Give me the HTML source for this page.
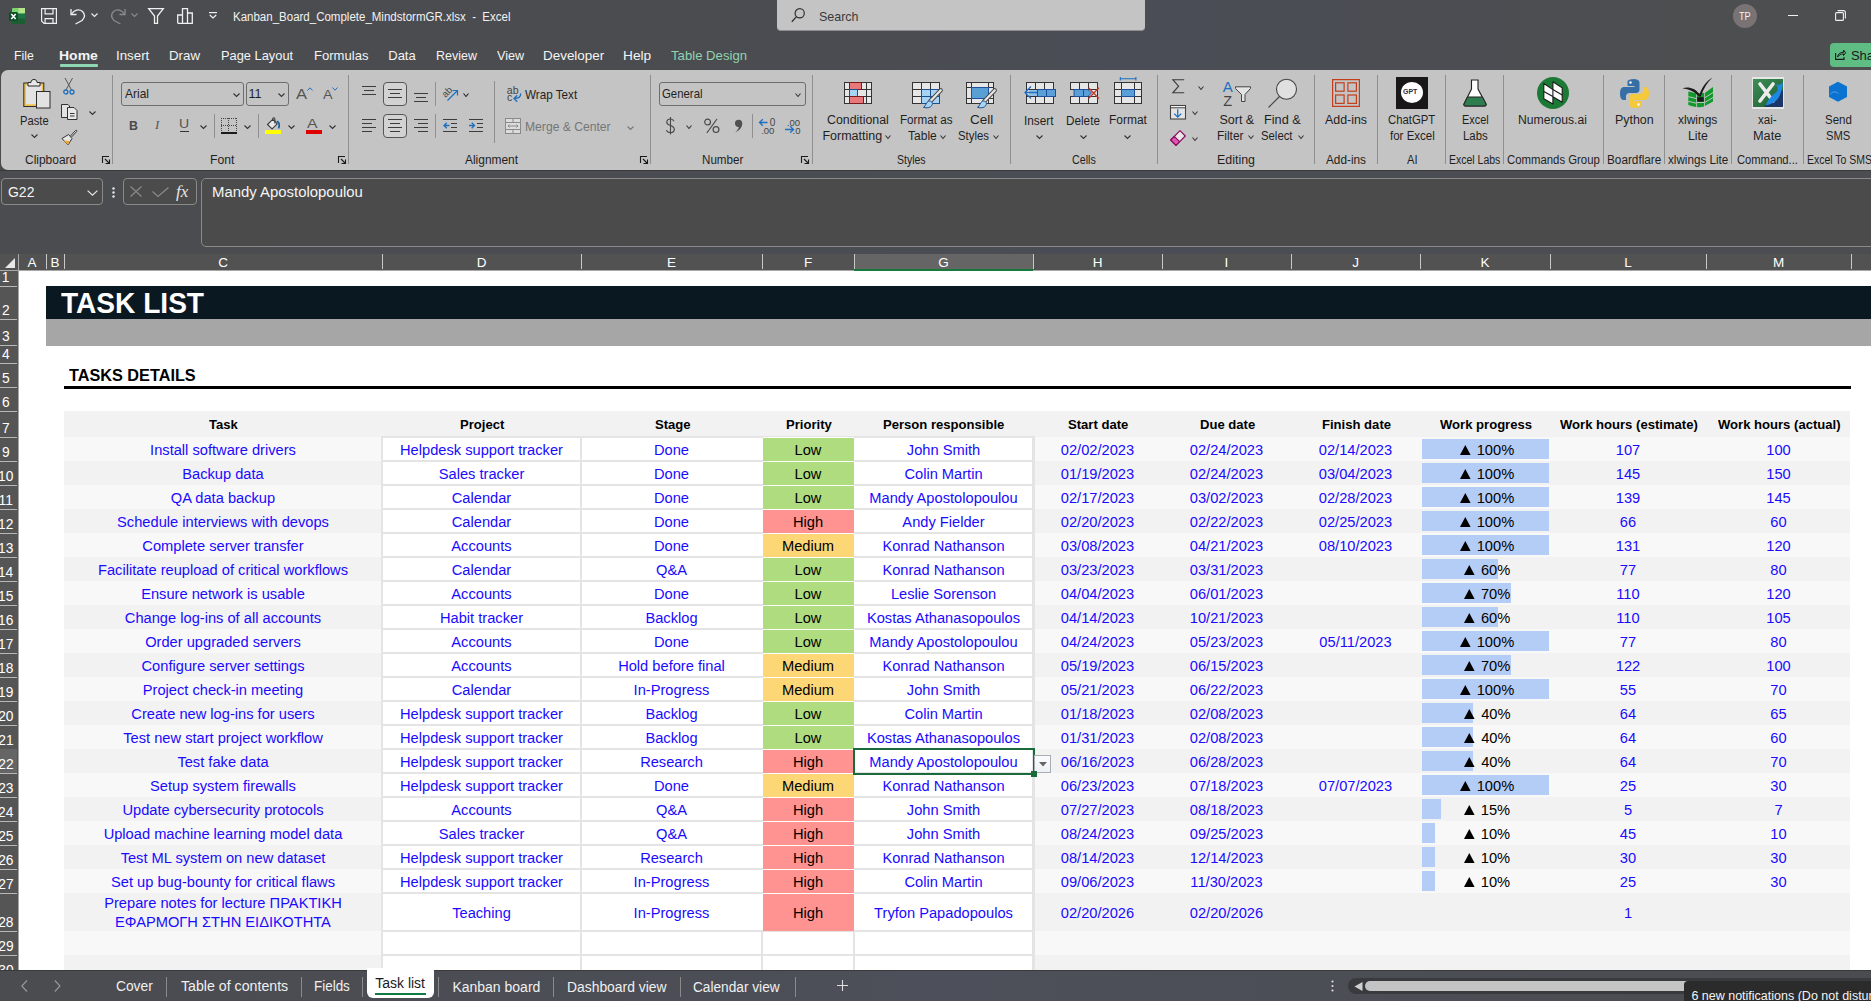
<!DOCTYPE html><html><head><meta charset="utf-8"><title>Excel</title><style>
*{margin:0;padding:0;box-sizing:border-box}
html,body{width:1871px;height:1001px;overflow:hidden;background:#4a4b4f;font-family:"Liberation Sans",sans-serif}
.a{position:absolute}
.t{position:absolute;white-space:nowrap;font-family:"Liberation Sans",sans-serif}
.cell{position:absolute;display:flex;align-items:center;justify-content:center;white-space:nowrap;font-size:14.67px;color:#1010f0;font-family:"Liberation Sans",sans-serif}
svg{overflow:visible}
</style></head><body>
<div class="a" style="left:0px;top:0px;width:1871px;height:70px;background:linear-gradient(90deg,#4b4c4f 0%,#4b4c50 35%,#4a4d55 60%,#4b4d53 75%,#4d4e50 90%,#4d4e50 100%);"></div>
<svg class="a" style="left:9px;top:8px" width="16" height="16" viewBox="0 0 16 16"><rect x="3" y="0" width="13" height="16" rx="1.5" fill="#217346"/>
<rect x="3" y="0" width="13" height="5.3" rx="1.2" fill="#7dd46f"/><rect x="9.5" y="0" width="6.5" height="5.3" fill="#b5e58a"/>
<rect x="3" y="10.6" width="13" height="5.4" rx="1.2" fill="#1a5e32"/>
<rect x="0" y="4" width="9" height="9" rx="1.5" fill="#0e4f2a"/>
<path d="M2.3 6 L6.7 11 M6.7 6 L2.3 11" stroke="#fff" stroke-width="1.5"/></svg>
<svg class="a" style="left:41px;top:8px" width="17" height="17" viewBox="0 0 17 17"><path d="M0.6 0.6 H15.4 V15.4 H3 L0.6 13 Z" fill="none" stroke="#f0f0f0" stroke-width="1.2"/>
<path d="M4.1 0.6 V5.8 H12 V0.6" fill="none" stroke="#f0f0f0" stroke-width="1.2"/>
<path d="M4.1 15.4 V10.6 H12 V15.4" fill="none" stroke="#f0f0f0" stroke-width="1.2"/></svg>
<svg class="a" style="left:70px;top:8px" width="16" height="16" viewBox="0 0 16 16"><path d="M1 1 V6.5 H6.5" fill="none" stroke="#f0f0f0" stroke-width="1.3"/>
<path d="M1.5 6 C4 2 9 0.5 12.5 3.5 C15.5 6.5 14.5 10 12 12.5 L5.5 16" fill="none" stroke="#f0f0f0" stroke-width="1.3"/></svg>
<svg class="a" style="left:91px;top:13px" width="7" height="4" viewBox="0 0 7 4"><path d="M0.5 0.5 L3.5 3.5 L6.5 0.5" fill="none" stroke="#f0f0f0" stroke-width="1.1"/></svg>
<svg class="a" style="left:110px;top:8px" width="16" height="16" viewBox="0 0 16 16"><path d="M15 1 V6.5 H9.5" fill="none" stroke="#8a8b8e" stroke-width="1.3"/>
<path d="M14.5 6 C12 2 7 0.5 3.5 3.5 C0.5 6.5 1.5 10 4 12.5 L10.5 16" fill="none" stroke="#8a8b8e" stroke-width="1.3"/></svg>
<svg class="a" style="left:131px;top:13px" width="7" height="4" viewBox="0 0 7 4"><path d="M0.5 0.5 L3.5 3.5 L6.5 0.5" fill="none" stroke="#8a8b8e" stroke-width="1.1"/></svg>
<svg class="a" style="left:148px;top:8px" width="16" height="16" viewBox="0 0 16 16"><path d="M0.7 0.7 H15.3 L9.5 8 V15.3 H6.5 V8 Z" fill="none" stroke="#f0f0f0" stroke-width="1.3"/></svg>
<svg class="a" style="left:177px;top:8px" width="16" height="16" viewBox="0 0 16 16"><path d="M0.7 15.3 V7 H5.5 V15.3 M5.5 15.3 V0.7 H10.5 V15.3 M10.5 15.3 V5 H15.3 V15.3 Z M0.7 15.3 H15.3" fill="none" stroke="#f0f0f0" stroke-width="1.3"/></svg>
<svg class="a" style="left:209px;top:12px" width="8" height="7" viewBox="0 0 8 7"><path d="M0 0.6 H8" stroke="#f0f0f0" stroke-width="1.2"/><path d="M0.8 3 L4 6 L7.2 3" fill="none" stroke="#f0f0f0" stroke-width="1.2"/></svg>
<div class="t" style="left:233.18px;top:10.67px;font-size:12.5px;line-height:12.5px;color:#f2f2f2;transform:scaleX(0.9203);transform-origin:0 0;">Kanban_Board_Complete_MindstormGR.xlsx&nbsp; -&nbsp; Excel</div>
<div class="a" style="left:777px;top:0px;width:368px;height:31px;background:#c4c4c4;border-radius:0 0 4px 4px;border-bottom:1px solid #8e8e8e"></div>
<svg class="a" style="left:791px;top:8px" width="14" height="15" viewBox="0 0 14 15"><circle cx="8.7" cy="5.3" r="4.6" fill="none" stroke="#303030" stroke-width="1.2"/><path d="M5.5 8.6 L0.8 13.8" stroke="#303030" stroke-width="1.3"/></svg>
<div class="t" style="left:818.74px;top:10.25px;font-size:13px;line-height:13px;color:#3a3a3a;transform:scaleX(0.9603);transform-origin:0 0;">Search</div>
<div class="a" style="left:1733px;top:4px;width:24px;height:24px;border-radius:50%;background:#7a7373"></div>
<div class="t" style="left:1739.32px;top:10.94px;font-size:11px;line-height:11px;color:#f4f4f4;transform:scaleX(0.8299);transform-origin:0 0;">TP</div>
<div class="a" style="left:1788px;top:15px;width:10px;height:1px;background:#f0f0f0;"></div>
<svg class="a" style="left:1835px;top:10px" width="11" height="11" viewBox="0 0 11 11"><rect x="0.6" y="2.6" width="7.8" height="7.8" rx="1" fill="none" stroke="#f0f0f0" stroke-width="1.1"/><path d="M2.6 0.6 H8.4 C9.5 0.6 10.4 1.5 10.4 2.6 V8.4" fill="none" stroke="#f0f0f0" stroke-width="1.1"/></svg>
<div class="a" style="left:1830px;top:43px;width:60px;height:24px;background:#5fbd84;border-radius:4px"></div>
<svg class="a" style="left:1835px;top:49px" width="11" height="11" viewBox="0 0 11 11"><path d="M0.6 4 V10.4 H9 V8" fill="none" stroke="#1a1a1a" stroke-width="1.1"/><path d="M2.5 8 C3 4.5 5.5 3.3 8.5 3.3 V1 L10.6 3.8 L8.5 6.5 V4.9 C6 4.9 4 6 2.5 8 Z" fill="none" stroke="#1a1a1a" stroke-width="1"/></svg>
<div class="t" style="left:1850.91px;top:49.25px;font-size:13px;line-height:13px;color:#1a1a1a;">Sha</div>
<div class="t" style="left:14.22px;top:49.25px;font-size:13px;line-height:13px;color:#f4f4f4;transform:scaleX(0.9448);transform-origin:0 0;">File</div>
<div class="t" style="left:59.09px;top:49.25px;font-size:13px;line-height:13px;color:#f4f4f4;font-weight:bold;transform:scaleX(1.0763);transform-origin:0 0;">Home</div>
<div class="t" style="left:115.80px;top:49.25px;font-size:13px;line-height:13px;color:#f4f4f4;transform:scaleX(1.0235);transform-origin:0 0;">Insert</div>
<div class="t" style="left:168.94px;top:49.25px;font-size:13px;line-height:13px;color:#f4f4f4;transform:scaleX(1.0234);transform-origin:0 0;">Draw</div>
<div class="t" style="left:220.97px;top:49.25px;font-size:13px;line-height:13px;color:#f4f4f4;transform:scaleX(0.9876);transform-origin:0 0;">Page Layout</div>
<div class="t" style="left:313.95px;top:49.25px;font-size:13px;line-height:13px;color:#f4f4f4;transform:scaleX(1.0054);transform-origin:0 0;">Formulas</div>
<div class="t" style="left:388.26px;top:49.25px;font-size:13px;line-height:13px;color:#f4f4f4;">Data</div>
<div class="t" style="left:436.20px;top:49.25px;font-size:13px;line-height:13px;color:#f4f4f4;transform:scaleX(0.9591);transform-origin:0 0;">Review</div>
<div class="t" style="left:496.94px;top:49.25px;font-size:13px;line-height:13px;color:#f4f4f4;transform:scaleX(0.9683);transform-origin:0 0;">View</div>
<div class="t" style="left:542.92px;top:49.25px;font-size:13px;line-height:13px;color:#f4f4f4;transform:scaleX(1.0337);transform-origin:0 0;">Developer</div>
<div class="t" style="left:622.90px;top:49.25px;font-size:13px;line-height:13px;color:#f4f4f4;transform:scaleX(1.0535);transform-origin:0 0;">Help</div>
<div class="t" style="left:670.74px;top:49.25px;font-size:13px;line-height:13px;color:#8fd3b0;transform:scaleX(1.0121);transform-origin:0 0;">Table Design</div>
<div class="a" style="left:60px;top:64px;width:38px;height:3px;background:#8fd6b5;border-radius:1px"></div>
<div class="a" style="left:1px;top:70px;width:1890px;height:100px;background:#c4c4c4;border-radius:7px 0 0 7px"></div>
<div class="a" style="left:112px;top:75px;width:1px;height:89px;background:#8f8f8f;"></div>
<div class="a" style="left:348px;top:75px;width:1px;height:89px;background:#8f8f8f;"></div>
<div class="a" style="left:650px;top:75px;width:1px;height:89px;background:#8f8f8f;"></div>
<div class="a" style="left:812px;top:75px;width:1px;height:89px;background:#8f8f8f;"></div>
<div class="a" style="left:1010px;top:75px;width:1px;height:89px;background:#8f8f8f;"></div>
<div class="a" style="left:1157px;top:75px;width:1px;height:89px;background:#8f8f8f;"></div>
<div class="a" style="left:1314px;top:75px;width:1px;height:89px;background:#8f8f8f;"></div>
<div class="a" style="left:1377px;top:75px;width:1px;height:89px;background:#8f8f8f;"></div>
<div class="a" style="left:1445px;top:75px;width:1px;height:89px;background:#8f8f8f;"></div>
<div class="a" style="left:1503px;top:75px;width:1px;height:89px;background:#8f8f8f;"></div>
<div class="a" style="left:1603px;top:75px;width:1px;height:89px;background:#8f8f8f;"></div>
<div class="a" style="left:1664px;top:75px;width:1px;height:89px;background:#8f8f8f;"></div>
<div class="a" style="left:1731px;top:75px;width:1px;height:89px;background:#8f8f8f;"></div>
<div class="a" style="left:1803px;top:75px;width:1px;height:89px;background:#8f8f8f;"></div>
<svg class="a" style="left:23px;top:79px" width="28" height="30" viewBox="0 0 28 30"><rect x="0.8" y="4" width="20" height="23.5" fill="#f2c14e" stroke="#2b2b2b" stroke-width="1"/>
<rect x="3" y="6.2" width="15.6" height="19" fill="#e3e3e3"/>
<path d="M5 7 V3.5 H8 C8 1.2 9.5 0.5 11 0.5 C12.5 0.5 14 1.2 14 3.5 H17 V7 Z" fill="#e8e8e8" stroke="#2b2b2b" stroke-width="1"/>
<rect x="13.5" y="12.5" width="13.5" height="16.5" fill="#e3e3e3" stroke="#2b2b2b" stroke-width="1"/></svg>
<div class="t" style="left:19.80px;top:114.84px;font-size:12.3px;line-height:12.3px;color:#1f1f1f;transform:scaleX(0.9115);transform-origin:0 0;">Paste</div>
<svg class="a" style="left:31px;top:134px" width="7" height="4" viewBox="0 0 7 4"><path d="M0.5 0.5 L3.5 3.5 L6.5 0.5" fill="none" stroke="#333" stroke-width="1.1"/></svg>
<svg class="a" style="left:63px;top:78px" width="12" height="17" viewBox="0 0 12 17"><path d="M2 0 L8.5 12 M9.5 0 L3 12" stroke="#555" stroke-width="1"/>
<circle cx="2.8" cy="14" r="2" fill="none" stroke="#1d6fc0" stroke-width="1.3"/><circle cx="9" cy="14" r="2" fill="none" stroke="#1d6fc0" stroke-width="1.3"/></svg>
<svg class="a" style="left:61px;top:104px" width="17" height="17" viewBox="0 0 17 17"><path d="M0.5 13.5 V0.5 H7 L8.5 2 V13.5 Z" fill="#e3e3e3" stroke="#333" stroke-width="1"/>
<path d="M6.5 15.5 V3.5 H13 L16 6.5 V15.5 Z" fill="#e8e8e8" stroke="#333" stroke-width="1"/>
<path d="M9 9.5 H13.5 M9 12 H13.5" stroke="#333" stroke-width="1"/></svg>
<svg class="a" style="left:89px;top:111px" width="7" height="4" viewBox="0 0 7 4"><path d="M0.5 0.5 L3.5 3.5 L6.5 0.5" fill="none" stroke="#333" stroke-width="1.1"/></svg>
<svg class="a" style="left:61px;top:129px" width="17" height="17" viewBox="0 0 17 17"><path d="M9.5 7 L14.5 1.5 C15.3 0.6 16.5 1.8 15.6 2.6 L10.5 8" fill="#e8e8e8" stroke="#333" stroke-width="1"/>
<path d="M1 9.5 L7.5 5.5 L11 9.5 L7 16 Z" fill="#e8e8e8" stroke="#333" stroke-width="1"/>
<path d="M2.5 11.5 L9 12 L7 16 Z" fill="#e8a93a"/></svg>
<div class="t" style="left:25.00px;top:153.84px;font-size:12.3px;line-height:12.3px;color:#1f1f1f;transform:scaleX(0.9729);transform-origin:0 0;">Clipboard</div>
<svg class="a" style="left:102px;top:156px" width="9" height="9" viewBox="0 0 9 9"><path d="M0.5 7 V0.5 H7" fill="none" stroke="#1a1a1a" stroke-width="1.1"/><path d="M3 3 L7.5 7.5 M7.5 3.5 V7.5 H3.5" fill="none" stroke="#1a1a1a" stroke-width="1.1"/></svg>
<div class="a" style="left:121px;top:82px;width:123px;height:24px;border:1px solid #6e6e6e;border-radius:3px"></div>
<div class="t" style="left:124.60px;top:87.58px;font-size:12.6px;line-height:12.6px;color:#1f1f1f;transform:scaleX(0.9516);transform-origin:0 0;">Arial</div>
<svg class="a" style="left:233px;top:93px" width="7" height="4" viewBox="0 0 7 4"><path d="M0.5 0.5 L3.5 3.5 L6.5 0.5" fill="none" stroke="#333" stroke-width="1.1"/></svg>
<div class="a" style="left:246px;top:82px;width:43px;height:24px;border:1px solid #6e6e6e;border-radius:3px"></div>
<div class="t" style="left:248.56px;top:87.58px;font-size:12.6px;line-height:12.6px;color:#1f1f1f;">11</div>
<svg class="a" style="left:278px;top:93px" width="7" height="4" viewBox="0 0 7 4"><path d="M0.5 0.5 L3.5 3.5 L6.5 0.5" fill="none" stroke="#333" stroke-width="1.1"/></svg>
<div class="t" style="left:296.00px;top:86.98px;font-size:14.5px;line-height:14.5px;color:#555;transform:scaleX(1.1408);transform-origin:0 0;">A</div>
<svg class="a" style="left:307px;top:87px" width="6" height="4" viewBox="0 0 6 4"><path d="M0.5 3.5 L3 0.8 L5.5 3.5" fill="none" stroke="#1d6fc0" stroke-width="1"/></svg>
<div class="t" style="left:323.00px;top:88.67px;font-size:12.5px;line-height:12.5px;color:#555;transform:scaleX(1.1429);transform-origin:0 0;">A</div>
<svg class="a" style="left:332px;top:87px" width="6" height="4" viewBox="0 0 6 4"><path d="M0.5 0.5 L3 3.2 L5.5 0.5" fill="none" stroke="#1d6fc0" stroke-width="1"/></svg>
<div class="t" style="left:128.60px;top:119.67px;font-size:12.5px;line-height:12.5px;color:#4a4a4a;font-weight:bold;transform:scaleX(0.9886);transform-origin:0 0;">B</div>
<div class="t" style="left:155px;top:118px;font-size:13px;line-height:13px;color:#555;font-style:italic;font-family:'Liberation Serif',serif">I</div>
<div class="t" style="left:179.45px;top:118.09px;font-size:12px;line-height:12px;color:#555;transform:scaleX(1.1696);transform-origin:0 0;">U</div>
<div class="a" style="left:180px;top:131px;width:9px;height:1px;background:#333;"></div>
<svg class="a" style="left:200px;top:125px" width="7" height="4" viewBox="0 0 7 4"><path d="M0.5 0.5 L3.5 3.5 L6.5 0.5" fill="none" stroke="#333" stroke-width="1.1"/></svg>
<div class="a" style="left:214px;top:114px;width:1px;height:24px;background:#8f8f8f;"></div>
<svg class="a" style="left:221px;top:118px" width="16" height="16" viewBox="0 0 16 16"><rect x="0" y="0" width="1" height="1" fill="#444"/><rect x="0" y="0" width="1" height="1" fill="#444"/><rect x="15" y="0" width="1" height="1" fill="#444"/><rect x="0" y="7" width="1" height="1" fill="#444"/><rect x="7" y="0" width="1" height="1" fill="#444"/><rect x="2" y="0" width="1" height="1" fill="#444"/><rect x="0" y="2" width="1" height="1" fill="#444"/><rect x="15" y="2" width="1" height="1" fill="#444"/><rect x="2" y="7" width="1" height="1" fill="#444"/><rect x="7" y="2" width="1" height="1" fill="#444"/><rect x="4" y="0" width="1" height="1" fill="#444"/><rect x="0" y="4" width="1" height="1" fill="#444"/><rect x="15" y="4" width="1" height="1" fill="#444"/><rect x="4" y="7" width="1" height="1" fill="#444"/><rect x="7" y="4" width="1" height="1" fill="#444"/><rect x="6" y="0" width="1" height="1" fill="#444"/><rect x="0" y="6" width="1" height="1" fill="#444"/><rect x="15" y="6" width="1" height="1" fill="#444"/><rect x="6" y="7" width="1" height="1" fill="#444"/><rect x="7" y="6" width="1" height="1" fill="#444"/><rect x="8" y="0" width="1" height="1" fill="#444"/><rect x="0" y="8" width="1" height="1" fill="#444"/><rect x="15" y="8" width="1" height="1" fill="#444"/><rect x="8" y="7" width="1" height="1" fill="#444"/><rect x="7" y="8" width="1" height="1" fill="#444"/><rect x="10" y="0" width="1" height="1" fill="#444"/><rect x="0" y="10" width="1" height="1" fill="#444"/><rect x="15" y="10" width="1" height="1" fill="#444"/><rect x="10" y="7" width="1" height="1" fill="#444"/><rect x="7" y="10" width="1" height="1" fill="#444"/><rect x="12" y="0" width="1" height="1" fill="#444"/><rect x="0" y="12" width="1" height="1" fill="#444"/><rect x="15" y="12" width="1" height="1" fill="#444"/><rect x="12" y="7" width="1" height="1" fill="#444"/><rect x="7" y="12" width="1" height="1" fill="#444"/><rect x="14" y="0" width="1" height="1" fill="#444"/><rect x="0" y="14" width="1" height="1" fill="#444"/><rect x="15" y="14" width="1" height="1" fill="#444"/><rect x="14" y="7" width="1" height="1" fill="#444"/><rect x="7" y="14" width="1" height="1" fill="#444"/><rect x="0" y="14" width="16" height="2" fill="#1a1a1a"/></svg>
<svg class="a" style="left:244px;top:125px" width="7" height="4" viewBox="0 0 7 4"><path d="M0.5 0.5 L3.5 3.5 L6.5 0.5" fill="none" stroke="#333" stroke-width="1.1"/></svg>
<div class="a" style="left:258px;top:114px;width:1px;height:24px;background:#8f8f8f;"></div>
<svg class="a" style="left:265px;top:116px" width="17" height="19" viewBox="0 0 17 19"><path d="M2.5 8.5 L7.8 3.3 L12.2 7.8 L7.1 12.8 Z" fill="#e8e8e8" stroke="#3a3a3a" stroke-width="1.1" stroke-linejoin="round"/>
<path d="M7.6 3.6 C7.6 1.2 9.9 1.2 9.9 3.6 V7.4" fill="none" stroke="#3a3a3a" stroke-width="1.1"/>
<path d="M12.3 5.6 C14.3 6 14.6 8.8 13.8 11.8" fill="none" stroke="#0f5aa0" stroke-width="1.6" stroke-linecap="round"/>
<rect x="0" y="14" width="16" height="4" fill="#ffff00"/></svg>
<svg class="a" style="left:288px;top:125px" width="7" height="4" viewBox="0 0 7 4"><path d="M0.5 0.5 L3.5 3.5 L6.5 0.5" fill="none" stroke="#333" stroke-width="1.1"/></svg>
<div class="t" style="left:307.00px;top:116.82px;font-size:13.5px;line-height:13.5px;color:#555;transform:scaleX(1.1696);transform-origin:0 0;">A</div>
<div class="a" style="left:306px;top:130px;width:16px;height:4px;background:#e00000;"></div>
<svg class="a" style="left:329px;top:125px" width="7" height="4" viewBox="0 0 7 4"><path d="M0.5 0.5 L3.5 3.5 L6.5 0.5" fill="none" stroke="#333" stroke-width="1.1"/></svg>
<div class="t" style="left:210.42px;top:153.84px;font-size:12.3px;line-height:12.3px;color:#1f1f1f;transform:scaleX(0.9934);transform-origin:0 0;">Font</div>
<svg class="a" style="left:338px;top:156px" width="9" height="9" viewBox="0 0 9 9"><path d="M0.5 7 V0.5 H7" fill="none" stroke="#1a1a1a" stroke-width="1.1"/><path d="M3 3 L7.5 7.5 M7.5 3.5 V7.5 H3.5" fill="none" stroke="#1a1a1a" stroke-width="1.1"/></svg>
<div class="a" style="left:362px;top:86px;width:14px;height:1px;background:#3c3c3c;"></div>
<div class="a" style="left:364px;top:90px;width:10px;height:1px;background:#3c3c3c;"></div>
<div class="a" style="left:362px;top:94px;width:14px;height:1px;background:#3c3c3c;"></div>
<div class="a" style="left:383px;top:82px;width:24px;height:24px;border:1px solid #555;border-radius:4px;background:#d2d2d2"></div>
<div class="a" style="left:388px;top:89px;width:14px;height:1px;background:#3c3c3c;"></div>
<div class="a" style="left:390px;top:93px;width:10px;height:1px;background:#3c3c3c;"></div>
<div class="a" style="left:388px;top:97px;width:14px;height:1px;background:#3c3c3c;"></div>
<div class="a" style="left:414px;top:93px;width:14px;height:1px;background:#3c3c3c;"></div>
<div class="a" style="left:416px;top:97px;width:10px;height:1px;background:#3c3c3c;"></div>
<div class="a" style="left:414px;top:101px;width:14px;height:1px;background:#3c3c3c;"></div>
<div class="a" style="left:435px;top:82px;width:1px;height:24px;background:#8f8f8f;"></div>
<svg class="a" style="left:440px;top:84px" width="20" height="18" viewBox="0 0 20 18"><text x="0" y="0" font-size="9.5" fill="#444" transform="translate(5.5 14) rotate(-45)" font-family="Liberation Sans">ab</text>
<path d="M7.5 16.5 L17 7 M12.5 6.5 H17.5 V11.5" fill="none" stroke="#1d6fc0" stroke-width="1.2"/></svg>
<svg class="a" style="left:463px;top:93px" width="6" height="4" viewBox="0 0 6 4"><path d="M0.5 0.5 L3.0 3.5 L5.5 0.5" fill="none" stroke="#222" stroke-width="1.1"/></svg>
<div class="a" style="left:494px;top:81px;width:1px;height:62px;background:#8f8f8f;"></div>
<svg class="a" style="left:506px;top:84px" width="17" height="19" viewBox="0 0 17 19"><text x="0.8" y="9.8" font-size="10.5" fill="#444" font-family="Liberation Sans">ab</text><text x="1" y="17.2" font-size="10.5" fill="#444" font-family="Liberation Sans">c</text>
<path d="M14.6 10 C14.8 13.3 12.5 14.3 8.2 14.5 M10.8 11.7 L8 14.5 L10.8 17.3" fill="none" stroke="#1d6fc0" stroke-width="1.4" stroke-linecap="round"/></svg>
<div class="t" style="left:524.94px;top:88.58px;font-size:12.6px;line-height:12.6px;color:#1f1f1f;transform:scaleX(0.9274);transform-origin:0 0;">Wrap Text</div>
<div class="a" style="left:362px;top:119px;width:14px;height:1px;background:#3c3c3c;"></div>
<div class="a" style="left:362px;top:123px;width:10px;height:1px;background:#3c3c3c;"></div>
<div class="a" style="left:362px;top:127px;width:14px;height:1px;background:#3c3c3c;"></div>
<div class="a" style="left:362px;top:131px;width:10px;height:1px;background:#3c3c3c;"></div>
<div class="a" style="left:383px;top:114px;width:24px;height:24px;border:1px solid #555;border-radius:4px;background:#d2d2d2"></div>
<div class="a" style="left:388px;top:119px;width:14px;height:1px;background:#3c3c3c;"></div>
<div class="a" style="left:390px;top:123px;width:10px;height:1px;background:#3c3c3c;"></div>
<div class="a" style="left:388px;top:127px;width:14px;height:1px;background:#3c3c3c;"></div>
<div class="a" style="left:390px;top:131px;width:10px;height:1px;background:#3c3c3c;"></div>
<div class="a" style="left:414px;top:119px;width:14px;height:1px;background:#3c3c3c;"></div>
<div class="a" style="left:418px;top:123px;width:10px;height:1px;background:#3c3c3c;"></div>
<div class="a" style="left:414px;top:127px;width:14px;height:1px;background:#3c3c3c;"></div>
<div class="a" style="left:418px;top:131px;width:10px;height:1px;background:#3c3c3c;"></div>
<div class="a" style="left:435px;top:114px;width:1px;height:24px;background:#8f8f8f;"></div>
<div class="a" style="left:443px;top:119px;width:14px;height:1px;background:#3c3c3c;"></div>
<div class="a" style="left:451px;top:123px;width:6px;height:1px;background:#3c3c3c;"></div>
<div class="a" style="left:451px;top:127px;width:6px;height:1px;background:#3c3c3c;"></div>
<div class="a" style="left:443px;top:131px;width:14px;height:1px;background:#3c3c3c;"></div>
<svg class="a" style="left:443px;top:122px" width="7" height="7" viewBox="0 0 7 7"><path d="M6.5 3.5 H1 M3.8 0.7 L1 3.5 L3.8 6.3" fill="none" stroke="#1d6fc0" stroke-width="1.3"/></svg>
<div class="a" style="left:469px;top:119px;width:14px;height:1px;background:#3c3c3c;"></div>
<div class="a" style="left:477px;top:123px;width:6px;height:1px;background:#3c3c3c;"></div>
<div class="a" style="left:477px;top:127px;width:6px;height:1px;background:#3c3c3c;"></div>
<div class="a" style="left:469px;top:131px;width:14px;height:1px;background:#3c3c3c;"></div>
<svg class="a" style="left:469px;top:122px" width="7" height="7" viewBox="0 0 7 7"><path d="M0 3.5 H5.5 M2.7 0.7 L5.5 3.5 L2.7 6.3" fill="none" stroke="#1d6fc0" stroke-width="1.3"/></svg>
<svg class="a" style="left:505px;top:118px" width="16" height="16" viewBox="0 0 16 16"><rect x="0.5" y="0.5" width="15" height="15" fill="#dcdcdc" stroke="#8a8a8a" stroke-width="1"/>
<path d="M0.5 4.5 H15.5 M0.5 11.5 H15.5 M8 0.5 V4.5 M8 11.5 V15.5" stroke="#8a8a8a" stroke-width="1"/>
<path d="M3 8 H13 M4.5 6.5 L3 8 L4.5 9.5 M11.5 6.5 L13 8 L11.5 9.5" fill="none" stroke="#8a8a8a" stroke-width="1"/></svg>
<div class="t" style="left:524.53px;top:120.58px;font-size:12.6px;line-height:12.6px;color:#767676;transform:scaleX(0.9629);transform-origin:0 0;">Merge &amp; Center</div>
<svg class="a" style="left:627px;top:126px" width="7" height="4" viewBox="0 0 7 4"><path d="M0.5 0.5 L3.5 3.5 L6.5 0.5" fill="none" stroke="#777" stroke-width="1.1"/></svg>
<div class="t" style="left:465.00px;top:153.84px;font-size:12.3px;line-height:12.3px;color:#1f1f1f;transform:scaleX(0.9705);transform-origin:0 0;">Alignment</div>
<svg class="a" style="left:640px;top:156px" width="9" height="9" viewBox="0 0 9 9"><path d="M0.5 7 V0.5 H7" fill="none" stroke="#1a1a1a" stroke-width="1.1"/><path d="M3 3 L7.5 7.5 M7.5 3.5 V7.5 H3.5" fill="none" stroke="#1a1a1a" stroke-width="1.1"/></svg>
<div class="a" style="left:659px;top:82px;width:147px;height:24px;border:1px solid #6e6e6e;border-radius:3px"></div>
<div class="t" style="left:661.73px;top:87.58px;font-size:12.6px;line-height:12.6px;color:#1f1f1f;transform:scaleX(0.9044);transform-origin:0 0;">General</div>
<svg class="a" style="left:795px;top:93px" width="6" height="4" viewBox="0 0 6 4"><path d="M0.5 0.5 L3.0 3.5 L5.5 0.5" fill="none" stroke="#333" stroke-width="1.1"/></svg>
<svg class="a" style="left:665px;top:117px" width="11" height="18" viewBox="0 0 11 18"><path d="M5.5 0 V17.5" stroke="#4a4a4a" stroke-width="1.1"/><path d="M9 4.2 C8.3 2.6 7 2 5.5 2 C3.2 2 1.8 3.3 1.8 5.2 C1.8 9.2 9.3 7.8 9.3 12.2 C9.3 14.3 7.6 15.6 5.3 15.6 C3.5 15.6 2 14.8 1.3 13.3" fill="none" stroke="#4a4a4a" stroke-width="1.2"/></svg>
<svg class="a" style="left:686px;top:125px" width="6" height="4" viewBox="0 0 6 4"><path d="M0.5 0.5 L3.0 3.5 L5.5 0.5" fill="none" stroke="#333" stroke-width="1.1"/></svg>
<svg class="a" style="left:704px;top:118px" width="16" height="16" viewBox="0 0 16 16"><circle cx="3.6" cy="4" r="2.9" fill="none" stroke="#4a4a4a" stroke-width="1.2"/><circle cx="12" cy="11.6" r="2.9" fill="none" stroke="#4a4a4a" stroke-width="1.2"/><path d="M13 1 L2.8 15" stroke="#4a4a4a" stroke-width="1.2"/></svg>
<svg class="a" style="left:734px;top:119px" width="9" height="14" viewBox="0 0 9 14"><circle cx="4.6" cy="4.3" r="3.6" fill="#505050"/><path d="M8.2 4.3 C8.2 8.5 5.5 11.8 1.2 13.3 C4.2 11 5 8.5 5 6.5 Z" fill="#505050"/></svg>
<div class="a" style="left:752px;top:114px;width:1px;height:24px;background:#8f8f8f;"></div>
<svg class="a" style="left:758px;top:117px" width="18" height="18" viewBox="0 0 18 18"><path d="M9.5 5.5 H1.5 M4.8 2.2 L1.5 5.5 L4.8 8.8" fill="none" stroke="#1d6fc0" stroke-width="1.3"/>
<text x="11.8" y="8.8" font-size="10" fill="#444" font-family="Liberation Sans">0</text>
<text x="3.2" y="16.8" font-size="9.5" fill="#444" font-family="Liberation Sans">.00</text></svg>
<svg class="a" style="left:784px;top:117px" width="18" height="18" viewBox="0 0 18 18"><text x="2.8" y="8.8" font-size="9.5" fill="#444" font-family="Liberation Sans">.00</text>
<text x="8.6" y="16.8" font-size="9.5" fill="#444" font-family="Liberation Sans">.0</text>
<path d="M1 12.5 H9.5 M6.2 9.2 L9.5 12.5 L6.2 15.8" fill="none" stroke="#1d6fc0" stroke-width="1.3"/></svg>
<div class="t" style="left:702.47px;top:153.84px;font-size:12.3px;line-height:12.3px;color:#1f1f1f;transform:scaleX(0.9432);transform-origin:0 0;">Number</div>
<svg class="a" style="left:801px;top:156px" width="9" height="9" viewBox="0 0 9 9"><path d="M0.5 7 V0.5 H7" fill="none" stroke="#1a1a1a" stroke-width="1.1"/><path d="M3 3 L7.5 7.5 M7.5 3.5 V7.5 H3.5" fill="none" stroke="#1a1a1a" stroke-width="1.1"/></svg>
<svg class="a" style="left:844px;top:82px" width="29" height="23" viewBox="0 0 29 23"><rect x="0.5" y="0.5" width="27" height="21" fill="#e6e6e6" stroke="#333" stroke-width="1"/>
<path d="M0.5 7.5 H27.5 M0.5 14.5 H27.5 M5.5 0.5 V21.5 M22.5 0.5 V21.5" stroke="#333" stroke-width="1"/>
<rect x="5.5" y="0.5" width="12" height="7" fill="#e8787a" stroke="#7a1a1a" stroke-width="1"/>
<rect x="5.5" y="7.5" width="8" height="7" fill="#a8d4f4" stroke="#1d4f90" stroke-width="1"/>
<rect x="5.5" y="14.5" width="14" height="7" fill="#e8787a" stroke="#7a1a1a" stroke-width="1"/></svg>
<div class="t" style="left:827.28px;top:113.67px;font-size:12.5px;line-height:12.5px;color:#1f1f1f;transform:scaleX(0.9875);transform-origin:0 0;">Conditional</div>
<div class="t" style="left:822.40px;top:129.67px;font-size:12.5px;line-height:12.5px;color:#1f1f1f;">Formatting</div>
<svg class="a" style="left:885px;top:135px" width="6" height="4" viewBox="0 0 6 4"><path d="M0.5 0.5 L3.0 3.5 L5.5 0.5" fill="none" stroke="#333" stroke-width="1.1"/></svg>
<svg class="a" style="left:912px;top:82px" width="31" height="27" viewBox="0 0 31 27"><rect x="0.5" y="0.5" width="27" height="21" fill="#e6e6e6" stroke="#333" stroke-width="1"/>
<rect x="9.5" y="7.5" width="18" height="14" fill="#a8d4f4" stroke="#1d4f90" stroke-width="1"/>
<path d="M9.5 0.5 V7.5 M18.5 0.5 V21.5 M0.5 7.5 H27.5 M0.5 14.5 H27.5" stroke="#333" stroke-width="1"/>
<path d="M9.5 7.5 V21.5 H27.5 V7.5 Z M9.5 14.5 H27.5 M18.5 7.5 V21.5" fill="none" stroke="#1d4f90" stroke-width="1"/>
<path d="M28.8 8.2 L18 19.5" stroke="#4a4a4a" stroke-width="4.2" stroke-linecap="round"/><path d="M28.8 8.2 L18 19.5" stroke="#e6e6e6" stroke-width="2.2" stroke-linecap="round"/>
<path d="M16.5 19.2 C19.5 18.3 21.5 21 19.8 23.5 C18.2 26 14.5 26.3 11.5 25.3 C14 24.3 13.8 20.2 16.5 19.2 Z" fill="#a8d4f4" stroke="#1d4f90" stroke-width="1"/></svg>
<div class="t" style="left:899.67px;top:113.67px;font-size:12.5px;line-height:12.5px;color:#1f1f1f;transform:scaleX(0.9323);transform-origin:0 0;">Format as</div>
<div class="t" style="left:908.36px;top:129.67px;font-size:12.5px;line-height:12.5px;color:#1f1f1f;transform:scaleX(0.9614);transform-origin:0 0;">Table</div>
<svg class="a" style="left:940px;top:135px" width="6" height="4" viewBox="0 0 6 4"><path d="M0.5 0.5 L3.0 3.5 L5.5 0.5" fill="none" stroke="#333" stroke-width="1.1"/></svg>
<svg class="a" style="left:966px;top:82px" width="31" height="27" viewBox="0 0 31 27"><rect x="0.5" y="0.5" width="27" height="21" fill="#e6e6e6" stroke="#333" stroke-width="1"/>
<path d="M5.5 0.5 V21.5 M22.5 0.5 V21.5 M0.5 5.5 H27.5 M0.5 16.5 H27.5" stroke="#333" stroke-width="1"/>
<rect x="5.5" y="5.5" width="17" height="11" fill="#5a9fd4" stroke="#2050a0" stroke-width="1"/>
<path d="M28.8 8.2 L18 19.5" stroke="#4a4a4a" stroke-width="4.2" stroke-linecap="round"/><path d="M28.8 8.2 L18 19.5" stroke="#e6e6e6" stroke-width="2.2" stroke-linecap="round"/>
<path d="M16.5 19.2 C19.5 18.3 21.5 21 19.8 23.5 C18.2 26 14.5 26.3 11.5 25.3 C14 24.3 13.8 20.2 16.5 19.2 Z" fill="#a8d4f4" stroke="#1d4f90" stroke-width="1"/></svg>
<div class="t" style="left:969.62px;top:113.67px;font-size:12.5px;line-height:12.5px;color:#1f1f1f;transform:scaleX(1.0816);transform-origin:0 0;">Cell</div>
<div class="t" style="left:958.29px;top:129.67px;font-size:12.5px;line-height:12.5px;color:#1f1f1f;transform:scaleX(0.9104);transform-origin:0 0;">Styles</div>
<svg class="a" style="left:993px;top:135px" width="6" height="4" viewBox="0 0 6 4"><path d="M0.5 0.5 L3.0 3.5 L5.5 0.5" fill="none" stroke="#333" stroke-width="1.1"/></svg>
<div class="t" style="left:897.03px;top:153.84px;font-size:12.3px;line-height:12.3px;color:#1f1f1f;transform:scaleX(0.8545);transform-origin:0 0;">Styles</div>
<svg class="a" style="left:1024px;top:82px" width="33" height="23" viewBox="0 0 33 23"><rect x="2.5" y="0.5" width="27" height="21" fill="#e6e6e6" stroke="#333" stroke-width="1"/>
<path d="M11.5 0.5 V21.5 M20.5 0.5 V21.5 M2.5 7.5 H29.5 M2.5 14.5 H29.5" stroke="#333" stroke-width="1"/>
<rect x="5" y="8" width="9" height="6" fill="#8fbfe6"/>
<rect x="13.5" y="7.5" width="18" height="7" fill="#5b9fd8" stroke="#1f4f9a" stroke-width="1"/><path d="M22.5 7.5 V14.5" stroke="#1f4f9a"/>
<path d="M13 10.5 H1.2 M7 4.5 L1 10.5 L7 16.5" fill="none" stroke="#1d6fc0" stroke-width="1.3"/></svg>
<div class="t" style="left:1024.34px;top:114.67px;font-size:12.5px;line-height:12.5px;color:#1f1f1f;transform:scaleX(0.9447);transform-origin:0 0;">Insert</div>
<svg class="a" style="left:1036px;top:135px" width="7" height="4" viewBox="0 0 7 4"><path d="M0.5 0.5 L3.5 3.5 L6.5 0.5" fill="none" stroke="#333" stroke-width="1.1"/></svg>
<svg class="a" style="left:1070px;top:82px" width="31" height="23" viewBox="0 0 31 23"><rect x="0.5" y="0.5" width="27" height="21" fill="#e6e6e6" stroke="#333" stroke-width="1"/>
<path d="M9.5 0.5 V21.5 M18.5 0.5 V21.5 M0.5 7.5 H27.5 M0.5 14.5 H27.5" stroke="#333" stroke-width="1"/>
<rect x="0" y="8" width="3.5" height="6" fill="#c4c4c4"/><rect x="28" y="8" width="3" height="6" fill="#c4c4c4"/>
<path d="M4 7.5 H18 L21.5 11 L18 14.5 H4 Z" fill="#5b9fd8" stroke="#1f4f9a" stroke-width="1"/><path d="M13.5 7.5 V14.5" stroke="#1f4f9a"/>
<path d="M18.5 5.8 L29 16.5 M29 5.8 L18.5 16.5" stroke="#c0392b" stroke-width="1.3"/></svg>
<div class="t" style="left:1066.46px;top:114.67px;font-size:12.5px;line-height:12.5px;color:#1f1f1f;transform:scaleX(0.9386);transform-origin:0 0;">Delete</div>
<svg class="a" style="left:1080px;top:135px" width="7" height="4" viewBox="0 0 7 4"><path d="M0.5 0.5 L3.5 3.5 L6.5 0.5" fill="none" stroke="#333" stroke-width="1.1"/></svg>
<svg class="a" style="left:1114px;top:77px" width="29" height="28" viewBox="0 0 29 28"><path d="M6.3 1.8 H21.9 M6.3 0 V3.6 M21.9 0 V3.6" stroke="#1d6fc0" stroke-width="1.1"/>
<rect x="0.5" y="5.5" width="27" height="21" fill="#e6e6e6" stroke="#333" stroke-width="1"/>
<path d="M7.5 5.5 V26.5 M20.5 5.5 V26.5 M0.5 12.5 H27.5 M0.5 19.5 H27.5" stroke="#333" stroke-width="1"/>
<rect x="7.5" y="12.5" width="13" height="7" fill="#5b9fd8" stroke="#1f4f9a" stroke-width="1"/></svg>
<div class="t" style="left:1108.74px;top:113.67px;font-size:12.5px;line-height:12.5px;color:#1f1f1f;transform:scaleX(0.9584);transform-origin:0 0;">Format</div>
<svg class="a" style="left:1124px;top:135px" width="7" height="4" viewBox="0 0 7 4"><path d="M0.5 0.5 L3.5 3.5 L6.5 0.5" fill="none" stroke="#333" stroke-width="1.1"/></svg>
<div class="t" style="left:1071.96px;top:153.84px;font-size:12.3px;line-height:12.3px;color:#1f1f1f;transform:scaleX(0.8700);transform-origin:0 0;">Cells</div>
<svg class="a" style="left:1172px;top:79px" width="13" height="15" viewBox="0 0 13 15"><path d="M12.2 0.7 H0.8 L6.6 7.2 L0.8 13.8 H12.2" fill="none" stroke="#3a3a3a" stroke-width="1.1"/></svg>
<svg class="a" style="left:1198px;top:86px" width="6" height="4" viewBox="0 0 6 4"><path d="M0.5 0.5 L3.0 3.5 L5.5 0.5" fill="none" stroke="#333" stroke-width="1.1"/></svg>
<svg class="a" style="left:1170px;top:105px" width="17" height="15" viewBox="0 0 17 15"><rect x="0.5" y="0.5" width="15" height="13.5" fill="#e4e4e4" stroke="#444" stroke-width="1.1"/><rect x="1" y="1" width="14" height="1.4" fill="#f4f4f4"/><path d="M0.5 2.8 H15.5" stroke="#444" stroke-width="1"/>
<path d="M7.75 4.3 V12 M4.2 8.6 L7.75 12.1 L11.3 8.6" fill="none" stroke="#1d6fc0" stroke-width="1.3"/></svg>
<svg class="a" style="left:1192px;top:111px" width="6" height="4" viewBox="0 0 6 4"><path d="M0.5 0.5 L3.0 3.5 L5.5 0.5" fill="none" stroke="#333" stroke-width="1.1"/></svg>
<svg class="a" style="left:1170px;top:130px" width="16" height="16" viewBox="0 0 16 16"><path d="M10 0.7 L15.3 6 L6 15.3 L0.7 10 Z" fill="#e8e8e8" stroke="#8a1060" stroke-width="1.2" stroke-linejoin="round"/>
<path d="M0.7 10 L4.3 6.4 L9.6 11.7 L6 15.3 Z" fill="#e055b5" stroke="#8a1060" stroke-width="1.2" stroke-linejoin="round"/></svg>
<svg class="a" style="left:1192px;top:137px" width="6" height="4" viewBox="0 0 6 4"><path d="M0.5 0.5 L3.0 3.5 L5.5 0.5" fill="none" stroke="#333" stroke-width="1.1"/></svg>
<svg class="a" style="left:1222px;top:79px" width="31" height="28" viewBox="0 0 31 28"><text x="0.8" y="12.6" font-size="15" fill="#1d6fc0" font-family="Liberation Sans">A</text>
<text x="1.2" y="26.7" font-size="14.5" fill="#444" font-family="Liberation Sans">Z</text>
<path d="M13.5 7.8 H28.5 V9.5 L23 15.5 V22.5 H19.5 V15.5 L13.5 9.5 Z" fill="#e4e4e4" stroke="#444" stroke-width="1"/></svg>
<div class="t" style="left:1219.44px;top:113.67px;font-size:12.5px;line-height:12.5px;color:#1f1f1f;">Sort &amp;</div>
<div class="t" style="left:1217.35px;top:129.67px;font-size:12.5px;line-height:12.5px;color:#1f1f1f;transform:scaleX(0.9540);transform-origin:0 0;">Filter</div>
<svg class="a" style="left:1248px;top:135px" width="6" height="4" viewBox="0 0 6 4"><path d="M0.5 0.5 L3.0 3.5 L5.5 0.5" fill="none" stroke="#333" stroke-width="1.1"/></svg>
<svg class="a" style="left:1266px;top:78px" width="32" height="31" viewBox="0 0 32 31"><circle cx="20.5" cy="11.3" r="10" fill="#e0e0e0" stroke="#444" stroke-width="1.1"/><path d="M13.5 18.5 L2.5 29.5" stroke="#444" stroke-width="1.1"/></svg>
<div class="t" style="left:1263.98px;top:113.67px;font-size:12.5px;line-height:12.5px;color:#1f1f1f;transform:scaleX(1.0171);transform-origin:0 0;">Find &amp;</div>
<div class="t" style="left:1261.49px;top:129.67px;font-size:12.5px;line-height:12.5px;color:#1f1f1f;transform:scaleX(0.9072);transform-origin:0 0;">Select</div>
<svg class="a" style="left:1298px;top:135px" width="6" height="4" viewBox="0 0 6 4"><path d="M0.5 0.5 L3.0 3.5 L5.5 0.5" fill="none" stroke="#333" stroke-width="1.1"/></svg>
<div class="t" style="left:1217.31px;top:153.84px;font-size:12.3px;line-height:12.3px;color:#1f1f1f;transform:scaleX(1.0096);transform-origin:0 0;">Editing</div>
<svg class="a" style="left:1332px;top:79px" width="28" height="28" viewBox="0 0 28 28"><rect x="0.6" y="0.6" width="26.8" height="26.8" fill="none" stroke="#c43e1c" stroke-width="1.2"/>
<rect x="3.6" y="3.8" width="8.5" height="8.4" fill="none" stroke="#c43e1c" stroke-width="1.2"/><rect x="15.9" y="3.8" width="8.5" height="8.4" fill="none" stroke="#c43e1c" stroke-width="1.2"/>
<rect x="3.6" y="16" width="8.5" height="8.4" fill="none" stroke="#c43e1c" stroke-width="1.2"/><rect x="15.9" y="16" width="8.5" height="8.4" fill="none" stroke="#c43e1c" stroke-width="1.2"/></svg>
<div class="t" style="left:1325.00px;top:113.67px;font-size:12.5px;line-height:12.5px;color:#1f1f1f;transform:scaleX(0.9920);transform-origin:0 0;">Add-ins</div>
<div class="t" style="left:1326.00px;top:153.84px;font-size:12.3px;line-height:12.3px;color:#1f1f1f;transform:scaleX(0.9596);transform-origin:0 0;">Add-ins</div>
<svg class="a" style="left:1396px;top:77px" width="32" height="32" viewBox="0 0 32 32"><rect x="0" y="0" width="32" height="32" fill="#1a1718"/>
<ellipse cx="16" cy="15.5" rx="11" ry="10.5" fill="#fff"/>
<text x="7" y="17" font-size="7" font-weight="bold" fill="#3a2a3a" font-family="Liberation Sans">GPT</text></svg>
<div class="t" style="left:1387.83px;top:113.67px;font-size:12.5px;line-height:12.5px;color:#1f1f1f;transform:scaleX(0.9065);transform-origin:0 0;">ChatGPT</div>
<div class="t" style="left:1389.83px;top:129.67px;font-size:12.5px;line-height:12.5px;color:#1f1f1f;transform:scaleX(0.9218);transform-origin:0 0;">for Excel</div>
<div class="t" style="left:1407.00px;top:153.84px;font-size:12.3px;line-height:12.3px;color:#1f1f1f;transform:scaleX(0.9087);transform-origin:0 0;">AI</div>
<svg class="a" style="left:1462px;top:79px" width="26" height="28" viewBox="0 0 26 28"><path d="M9.5 1 H16 V10 L24 25 C24.5 26.5 23.5 27 22 27 H4 C2.5 27 1.5 26.5 2 25 L9.5 10 Z" fill="#fff" stroke="#222" stroke-width="1.1"/>
<path d="M5.5 18 H20.5 L24 25 C24.5 26.5 23.5 27 22 27 H4 C2.5 27 1.5 26.5 2 25 Z" fill="#2e7d4f" stroke="#222" stroke-width="1"/></svg>
<div class="t" style="left:1461.63px;top:113.67px;font-size:12.5px;line-height:12.5px;color:#1f1f1f;transform:scaleX(0.8730);transform-origin:0 0;">Excel</div>
<div class="t" style="left:1462.59px;top:129.67px;font-size:12.5px;line-height:12.5px;color:#1f1f1f;transform:scaleX(0.9109);transform-origin:0 0;">Labs</div>
<div class="t" style="left:1448.66px;top:153.84px;font-size:12.3px;line-height:12.3px;color:#1f1f1f;transform:scaleX(0.8530);transform-origin:0 0;">Excel Labs</div>
<svg class="a" style="left:1537px;top:77px" width="32" height="32" viewBox="0 0 32 32"><circle cx="16" cy="16" r="16" fill="#1b7a35"/>
<path d="M6.8 6.5 L15.9 12.6 V27 L6.8 21.7 Z M15.9 4.8 L25.2 10.9 V25.3 L15.9 19.8 Z" fill="#fff" stroke="#1a1a1a" stroke-width="1.1" stroke-linejoin="round"/>
<path d="M6.8 14.4 L15.9 19.6 M15.9 12.5 L25.2 18" stroke="#1a1a1a" stroke-width="1.1"/></svg>
<div class="t" style="left:1518.43px;top:113.67px;font-size:12.5px;line-height:12.5px;color:#1f1f1f;transform:scaleX(0.9725);transform-origin:0 0;">Numerous.ai</div>
<div class="t" style="left:1507.03px;top:153.84px;font-size:12.3px;line-height:12.3px;color:#1f1f1f;transform:scaleX(0.9237);transform-origin:0 0;">Commands Group</div>
<svg class="a" style="left:1619px;top:78px" width="31" height="31" viewBox="0 0 31 31"><path d="M15 1 C8 1 8.5 4 8.5 4 V8 H15.5 V9 H5 C5 9 1 8.5 1 15.5 C1 22.5 4.5 22 4.5 22 H7 V18.5 C7 18.5 7 15 10.5 15 H17 C17 15 20.5 15 20.5 11.5 V5 C20.5 5 21 1 15 1 Z" fill="#366fa6"/>
<path d="M16 30 C23 30 22.5 27 22.5 27 V23 H15.5 V22 H26 C26 22 30 22.5 30 15.5 C30 8.5 26.5 9 26.5 9 H24 V12.5 C24 12.5 24 16 20.5 16 H14 C14 16 10.5 16 10.5 19.5 V26 C10.5 26 10 30 16 30 Z" fill="#f4c93b"/>
<circle cx="11.5" cy="4.5" r="1.2" fill="#fff"/><circle cx="19.5" cy="26.5" r="1.2" fill="#fff"/></svg>
<div class="t" style="left:1614.51px;top:113.67px;font-size:12.5px;line-height:12.5px;color:#1f1f1f;transform:scaleX(0.9939);transform-origin:0 0;">Python</div>
<div class="t" style="left:1606.56px;top:153.84px;font-size:12.3px;line-height:12.3px;color:#1f1f1f;transform:scaleX(0.9568);transform-origin:0 0;">Boardflare</div>
<svg class="a" style="left:1678px;top:74px" width="38" height="36" viewBox="0 0 38 36"><path d="M10.3 17.5 Q14 18 18 19.5 V33 Q14 32.5 10.3 31 Z" fill="#109a2c"/>
<path d="M18.8 19 H26 V32.5 Q22 33.5 18.8 33 Z" fill="#109a2c"/>
<path d="M26.8 19 L35 13 V27.5 L26.8 32 Z" fill="#109a2c"/>
<path d="M10.3 22.7 Q14 23.3 18 24.6 M10.3 27.4 Q14 28 18 29.2 M18.8 28.5 H26 M26.8 23.8 L35 18.5 M26.8 28.5 L35 23.5" fill="none" stroke="#c4c4c4" stroke-width="1"/>
<path d="M4.5 14.5 C9 12.5 17 13.5 21.5 20.5 C24 13 28.5 7 34.5 3.5 C29 8.5 25.5 15 22.8 22.5 L21 22.5 C17 18 11 15 4.5 14.5 Z" fill="#1a1a18"/>
<rect x="19.2" y="23.2" width="6.5" height="4.5" fill="#1a1a18"/></svg>
<div class="t" style="left:1677.68px;top:113.67px;font-size:12.5px;line-height:12.5px;color:#1f1f1f;transform:scaleX(0.9595);transform-origin:0 0;">xlwings</div>
<div class="t" style="left:1687.81px;top:129.67px;font-size:12.5px;line-height:12.5px;color:#1f1f1f;transform:scaleX(0.9879);transform-origin:0 0;">Lite</div>
<div class="t" style="left:1667.68px;top:153.84px;font-size:12.3px;line-height:12.3px;color:#1f1f1f;transform:scaleX(0.9480);transform-origin:0 0;">xlwings Lite</div>
<svg class="a" style="left:1752px;top:77px" width="32" height="32" viewBox="0 0 32 32"><defs><linearGradient id="xg" x1="0" y1="0" x2="1" y2="1"><stop offset="0" stop-color="#3d8f55"/><stop offset="1" stop-color="#1d5a33"/></linearGradient></defs>
<rect x="0" y="0" width="32" height="32" fill="#e6e6e6"/><rect x="1" y="2" width="30" height="28" fill="url(#xg)"/>
<path d="M12 30 L31 30 L31 13 Z" fill="#1b3768"/>
<path d="M8 7 L21 24 M21 7 L8 24" stroke="#ececec" stroke-width="3.6" stroke-linecap="round"/>
<path d="M14 28.5 C16 22 20 18.5 24.5 15 C26.5 12.5 26 10 24 7.5 C27 8.5 29 7.5 31 5.5 C30.5 9 30 11.5 29 14.5 C28 20.5 23.5 26.5 14 28.5 Z" fill="#1e88e5"/></svg>
<div class="t" style="left:1757.78px;top:113.67px;font-size:12.5px;line-height:12.5px;color:#1f1f1f;transform:scaleX(0.9282);transform-origin:0 0;">xai-</div>
<div class="t" style="left:1753.28px;top:129.67px;font-size:12.5px;line-height:12.5px;color:#1f1f1f;transform:scaleX(1.0171);transform-origin:0 0;">Mate</div>
<div class="t" style="left:1737.04px;top:153.84px;font-size:12.3px;line-height:12.3px;color:#1f1f1f;transform:scaleX(0.9095);transform-origin:0 0;">Command...</div>
<svg class="a" style="left:1828px;top:81px" width="20" height="22" viewBox="0 0 20 22"><path d="M10 0.8 L19 5.5 V16 L10 20.8 L1 16 V5.5 Z" fill="#0a72d0"/>
<path d="M2 13.5 C4 10.5 8 10 10.5 12.5" fill="none" stroke="#5aa0e0" stroke-width="1"/></svg>
<div class="t" style="left:1825.48px;top:113.67px;font-size:12.5px;line-height:12.5px;color:#1f1f1f;transform:scaleX(0.9220);transform-origin:0 0;">Send</div>
<div class="t" style="left:1826.49px;top:129.67px;font-size:12.5px;line-height:12.5px;color:#1f1f1f;transform:scaleX(0.8983);transform-origin:0 0;">SMS</div>
<div class="t" style="left:1806.56px;top:153.84px;font-size:12.3px;line-height:12.3px;color:#1f1f1f;transform:scaleX(0.8504);transform-origin:0 0;">Excel To SMS</div>
<div class="a" style="left:0px;top:170px;width:1871px;height:84px;background:linear-gradient(90deg,#4b4c4f 0%,#4a4c53 40%,#4a4d55 60%,#4c4d51 100%);"></div>
<div class="a" style="left:0px;top:170px;width:1871px;height:1px;background:#3a3a3a;"></div>
<div class="a" style="left:1px;top:178px;width:102px;height:27px;border:1px solid #8a8a8a;border-radius:4px;background:#4b4b4b"></div>
<div class="t" style="left:7.80px;top:185.57px;font-size:13.8px;line-height:13.8px;color:#f4f4f4;transform:scaleX(1.0121);transform-origin:0 0;">G22</div>
<svg class="a" style="left:87px;top:190px" width="11" height="6" viewBox="0 0 11 6"><path d="M0.6 0.6 L5.5 5.2 L10.4 0.6" fill="none" stroke="#e8e8e8" stroke-width="1.2"/></svg>
<svg class="a" style="left:112px;top:187px" width="3" height="11" viewBox="0 0 3 11"><circle cx="1.5" cy="1.5" r="1.2" fill="#e8e8e8"/><circle cx="1.5" cy="5.5" r="1.2" fill="#e8e8e8"/><circle cx="1.5" cy="9.5" r="1.2" fill="#e8e8e8"/></svg>
<div class="a" style="left:123px;top:178px;width:74px;height:27px;border:1px solid #8a8a8a;border-radius:4px;background:#4b4b4b"></div>
<svg class="a" style="left:130px;top:186px" width="12" height="11" viewBox="0 0 12 11"><path d="M0.5 0.5 L11.5 10.5 M11.5 0.5 L0.5 10.5" stroke="#8c8c8c" stroke-width="1.1"/></svg>
<svg class="a" style="left:152px;top:187px" width="17" height="10" viewBox="0 0 17 10"><path d="M0.5 4.5 L6 9.5 L16.5 0.5" fill="none" stroke="#8c8c8c" stroke-width="1.1"/></svg>
<div class="t" style="left:176px;top:183px;font-size:17px;line-height:17px;color:#e8e8e8;font-style:italic;font-family:'Liberation Serif',serif">fx</div>
<div class="a" style="left:201px;top:178px;width:1700px;height:69px;border:1px solid #8a8a8a;border-radius:5px;background:#4b4b4b"></div>
<div class="t" style="left:212.01px;top:185.57px;font-size:13.8px;line-height:13.8px;color:#f4f4f4;transform:scaleX(1.0802);transform-origin:0 0;">Mandy Apostolopoulou</div>
<div class="a" style="left:0px;top:254px;width:1871px;height:16px;background:#525252;"></div>
<div class="a" style="left:0;top:270px;width:1871px;height:700px;overflow:hidden;background:#fff">
<div class="a" style="left:46px;top:16px;width:1825px;height:33px;background:#0a1822;"></div>
<div class="t" style="left:61.02px;top:18.70px;font-size:29px;line-height:29px;color:#fff;font-weight:bold;transform:scaleX(0.9685);transform-origin:0 0;">TASK LIST</div>
<div class="a" style="left:46px;top:49px;width:1825px;height:27px;background:#a6a6a6;"></div>
<div class="t" style="left:69.24px;top:97.28px;font-size:16.5px;line-height:16.5px;color:#000;font-weight:bold;transform:scaleX(0.9846);transform-origin:0 0;">TASKS DETAILS</div>
<div class="a" style="left:64px;top:116px;width:1787px;height:3px;background:#000;"></div>
<div class="a" style="left:64px;top:141px;width:1786px;height:26px;background:#f2f2f2;"></div>
<div class="t" style="left:209.41px;top:147.74px;font-size:13.6px;line-height:13.6px;color:#000;font-weight:bold;transform:scaleX(0.9617);transform-origin:0 0;">Task</div>
<div class="t" style="left:459.90px;top:147.74px;font-size:13.6px;line-height:13.6px;color:#000;font-weight:bold;transform:scaleX(0.9617);transform-origin:0 0;">Project</div>
<div class="t" style="left:654.61px;top:147.74px;font-size:13.6px;line-height:13.6px;color:#000;font-weight:bold;transform:scaleX(0.9617);transform-origin:0 0;">Stage</div>
<div class="t" style="left:785.62px;top:147.74px;font-size:13.6px;line-height:13.6px;color:#000;font-weight:bold;transform:scaleX(0.9617);transform-origin:0 0;">Priority</div>
<div class="t" style="left:883.48px;top:147.74px;font-size:13.6px;line-height:13.6px;color:#000;font-weight:bold;transform:scaleX(0.9617);transform-origin:0 0;">Person responsible</div>
<div class="t" style="left:1068.25px;top:147.74px;font-size:13.6px;line-height:13.6px;color:#000;font-weight:bold;transform:scaleX(0.9617);transform-origin:0 0;">Start date</div>
<div class="t" style="left:1199.57px;top:147.74px;font-size:13.6px;line-height:13.6px;color:#000;font-weight:bold;transform:scaleX(0.9617);transform-origin:0 0;">Due date</div>
<div class="t" style="left:1321.67px;top:147.74px;font-size:13.6px;line-height:13.6px;color:#000;font-weight:bold;transform:scaleX(0.9617);transform-origin:0 0;">Finish date</div>
<div class="t" style="left:1440.12px;top:147.74px;font-size:13.6px;line-height:13.6px;color:#000;font-weight:bold;transform:scaleX(0.9617);transform-origin:0 0;">Work progress</div>
<div class="t" style="left:1560.30px;top:147.74px;font-size:13.6px;line-height:13.6px;color:#000;font-weight:bold;transform:scaleX(0.9617);transform-origin:0 0;">Work hours (estimate)</div>
<div class="t" style="left:1718.42px;top:147.74px;font-size:13.6px;line-height:13.6px;color:#000;font-weight:bold;transform:scaleX(0.9617);transform-origin:0 0;">Work hours (actual)</div>
<div class="a" style="left:64px;top:167px;width:1786px;height:24px;background:#f8f8f8;"></div>
<div class="a" style="left:64px;top:191px;width:1786px;height:24px;background:#f2f2f2;"></div>
<div class="a" style="left:64px;top:215px;width:1786px;height:24px;background:#f8f8f8;"></div>
<div class="a" style="left:64px;top:239px;width:1786px;height:24px;background:#f2f2f2;"></div>
<div class="a" style="left:64px;top:263px;width:1786px;height:24px;background:#f8f8f8;"></div>
<div class="a" style="left:64px;top:287px;width:1786px;height:24px;background:#f2f2f2;"></div>
<div class="a" style="left:64px;top:311px;width:1786px;height:24px;background:#f8f8f8;"></div>
<div class="a" style="left:64px;top:335px;width:1786px;height:24px;background:#f2f2f2;"></div>
<div class="a" style="left:64px;top:359px;width:1786px;height:24px;background:#f8f8f8;"></div>
<div class="a" style="left:64px;top:383px;width:1786px;height:24px;background:#f2f2f2;"></div>
<div class="a" style="left:64px;top:407px;width:1786px;height:24px;background:#f8f8f8;"></div>
<div class="a" style="left:64px;top:431px;width:1786px;height:24px;background:#f2f2f2;"></div>
<div class="a" style="left:64px;top:455px;width:1786px;height:24px;background:#f8f8f8;"></div>
<div class="a" style="left:64px;top:479px;width:1786px;height:24px;background:#f2f2f2;"></div>
<div class="a" style="left:64px;top:503px;width:1786px;height:24px;background:#f8f8f8;"></div>
<div class="a" style="left:64px;top:527px;width:1786px;height:24px;background:#f2f2f2;"></div>
<div class="a" style="left:64px;top:551px;width:1786px;height:24px;background:#f8f8f8;"></div>
<div class="a" style="left:64px;top:575px;width:1786px;height:24px;background:#f2f2f2;"></div>
<div class="a" style="left:64px;top:599px;width:1786px;height:24px;background:#f8f8f8;"></div>
<div class="a" style="left:64px;top:623px;width:1786px;height:38px;background:#f2f2f2;"></div>
<div class="a" style="left:64px;top:661px;width:1786px;height:24px;background:#f8f8f8;"></div>
<div class="a" style="left:64px;top:685px;width:1786px;height:24px;background:#f2f2f2;"></div>
<div class="a" style="left:381px;top:166px;width:654px;height:26px;background:#e4e4e4;"></div>
<div class="a" style="left:381px;top:190px;width:654px;height:26px;background:#e4e4e4;"></div>
<div class="a" style="left:381px;top:214px;width:654px;height:26px;background:#e4e4e4;"></div>
<div class="a" style="left:381px;top:238px;width:654px;height:26px;background:#e4e4e4;"></div>
<div class="a" style="left:381px;top:262px;width:654px;height:26px;background:#e4e4e4;"></div>
<div class="a" style="left:381px;top:286px;width:654px;height:26px;background:#e4e4e4;"></div>
<div class="a" style="left:381px;top:310px;width:654px;height:26px;background:#e4e4e4;"></div>
<div class="a" style="left:381px;top:334px;width:654px;height:26px;background:#e4e4e4;"></div>
<div class="a" style="left:381px;top:358px;width:654px;height:26px;background:#e4e4e4;"></div>
<div class="a" style="left:381px;top:382px;width:654px;height:26px;background:#e4e4e4;"></div>
<div class="a" style="left:381px;top:406px;width:654px;height:26px;background:#e4e4e4;"></div>
<div class="a" style="left:381px;top:430px;width:654px;height:26px;background:#e4e4e4;"></div>
<div class="a" style="left:381px;top:454px;width:654px;height:26px;background:#e4e4e4;"></div>
<div class="a" style="left:381px;top:478px;width:654px;height:26px;background:#e4e4e4;"></div>
<div class="a" style="left:381px;top:502px;width:654px;height:26px;background:#e4e4e4;"></div>
<div class="a" style="left:381px;top:526px;width:654px;height:26px;background:#e4e4e4;"></div>
<div class="a" style="left:381px;top:550px;width:654px;height:26px;background:#e4e4e4;"></div>
<div class="a" style="left:381px;top:574px;width:654px;height:26px;background:#e4e4e4;"></div>
<div class="a" style="left:381px;top:598px;width:654px;height:26px;background:#e4e4e4;"></div>
<div class="a" style="left:381px;top:622px;width:654px;height:40px;background:#e4e4e4;"></div>
<div class="a" style="left:381px;top:660px;width:654px;height:26px;background:#e4e4e4;"></div>
<div class="a" style="left:381px;top:684px;width:654px;height:26px;background:#e4e4e4;"></div>
<div class="a" style="left:383px;top:168px;width:197px;height:22px;background:#fff;"></div>
<div class="a" style="left:582px;top:168px;width:181px;height:22px;background:#fff;"></div>
<div class="a" style="left:763px;top:167px;width:91px;height:1px;background:#fff;"></div>
<div class="a" style="left:763px;top:168px;width:91px;height:23px;background:#afdc7e;"></div>
<div class="a" style="left:854px;top:168px;width:178px;height:22px;background:#fff;"></div>
<div class="a" style="left:383px;top:192px;width:197px;height:22px;background:#fff;"></div>
<div class="a" style="left:582px;top:192px;width:181px;height:22px;background:#fff;"></div>
<div class="a" style="left:763px;top:191px;width:91px;height:1px;background:#fff;"></div>
<div class="a" style="left:763px;top:192px;width:91px;height:23px;background:#afdc7e;"></div>
<div class="a" style="left:854px;top:192px;width:178px;height:22px;background:#fff;"></div>
<div class="a" style="left:383px;top:216px;width:197px;height:22px;background:#fff;"></div>
<div class="a" style="left:582px;top:216px;width:181px;height:22px;background:#fff;"></div>
<div class="a" style="left:763px;top:215px;width:91px;height:1px;background:#fff;"></div>
<div class="a" style="left:763px;top:216px;width:91px;height:23px;background:#afdc7e;"></div>
<div class="a" style="left:854px;top:216px;width:178px;height:22px;background:#fff;"></div>
<div class="a" style="left:383px;top:240px;width:197px;height:22px;background:#fff;"></div>
<div class="a" style="left:582px;top:240px;width:181px;height:22px;background:#fff;"></div>
<div class="a" style="left:763px;top:239px;width:91px;height:1px;background:#fff;"></div>
<div class="a" style="left:763px;top:240px;width:91px;height:23px;background:#ff9391;"></div>
<div class="a" style="left:854px;top:240px;width:178px;height:22px;background:#fff;"></div>
<div class="a" style="left:383px;top:264px;width:197px;height:22px;background:#fff;"></div>
<div class="a" style="left:582px;top:264px;width:181px;height:22px;background:#fff;"></div>
<div class="a" style="left:763px;top:263px;width:91px;height:1px;background:#fff;"></div>
<div class="a" style="left:763px;top:264px;width:91px;height:23px;background:#fdd676;"></div>
<div class="a" style="left:854px;top:264px;width:178px;height:22px;background:#fff;"></div>
<div class="a" style="left:383px;top:288px;width:197px;height:22px;background:#fff;"></div>
<div class="a" style="left:582px;top:288px;width:181px;height:22px;background:#fff;"></div>
<div class="a" style="left:763px;top:287px;width:91px;height:1px;background:#fff;"></div>
<div class="a" style="left:763px;top:288px;width:91px;height:23px;background:#afdc7e;"></div>
<div class="a" style="left:854px;top:288px;width:178px;height:22px;background:#fff;"></div>
<div class="a" style="left:383px;top:312px;width:197px;height:22px;background:#fff;"></div>
<div class="a" style="left:582px;top:312px;width:181px;height:22px;background:#fff;"></div>
<div class="a" style="left:763px;top:311px;width:91px;height:1px;background:#fff;"></div>
<div class="a" style="left:763px;top:312px;width:91px;height:23px;background:#afdc7e;"></div>
<div class="a" style="left:854px;top:312px;width:178px;height:22px;background:#fff;"></div>
<div class="a" style="left:383px;top:336px;width:197px;height:22px;background:#fff;"></div>
<div class="a" style="left:582px;top:336px;width:181px;height:22px;background:#fff;"></div>
<div class="a" style="left:763px;top:335px;width:91px;height:1px;background:#fff;"></div>
<div class="a" style="left:763px;top:336px;width:91px;height:23px;background:#afdc7e;"></div>
<div class="a" style="left:854px;top:336px;width:178px;height:22px;background:#fff;"></div>
<div class="a" style="left:383px;top:360px;width:197px;height:22px;background:#fff;"></div>
<div class="a" style="left:582px;top:360px;width:181px;height:22px;background:#fff;"></div>
<div class="a" style="left:763px;top:359px;width:91px;height:1px;background:#fff;"></div>
<div class="a" style="left:763px;top:360px;width:91px;height:23px;background:#afdc7e;"></div>
<div class="a" style="left:854px;top:360px;width:178px;height:22px;background:#fff;"></div>
<div class="a" style="left:383px;top:384px;width:197px;height:22px;background:#fff;"></div>
<div class="a" style="left:582px;top:384px;width:181px;height:22px;background:#fff;"></div>
<div class="a" style="left:763px;top:383px;width:91px;height:1px;background:#fff;"></div>
<div class="a" style="left:763px;top:384px;width:91px;height:23px;background:#fdd676;"></div>
<div class="a" style="left:854px;top:384px;width:178px;height:22px;background:#fff;"></div>
<div class="a" style="left:383px;top:408px;width:197px;height:22px;background:#fff;"></div>
<div class="a" style="left:582px;top:408px;width:181px;height:22px;background:#fff;"></div>
<div class="a" style="left:763px;top:407px;width:91px;height:1px;background:#fff;"></div>
<div class="a" style="left:763px;top:408px;width:91px;height:23px;background:#fdd676;"></div>
<div class="a" style="left:854px;top:408px;width:178px;height:22px;background:#fff;"></div>
<div class="a" style="left:383px;top:432px;width:197px;height:22px;background:#fff;"></div>
<div class="a" style="left:582px;top:432px;width:181px;height:22px;background:#fff;"></div>
<div class="a" style="left:763px;top:431px;width:91px;height:1px;background:#fff;"></div>
<div class="a" style="left:763px;top:432px;width:91px;height:23px;background:#afdc7e;"></div>
<div class="a" style="left:854px;top:432px;width:178px;height:22px;background:#fff;"></div>
<div class="a" style="left:383px;top:456px;width:197px;height:22px;background:#fff;"></div>
<div class="a" style="left:582px;top:456px;width:181px;height:22px;background:#fff;"></div>
<div class="a" style="left:763px;top:455px;width:91px;height:1px;background:#fff;"></div>
<div class="a" style="left:763px;top:456px;width:91px;height:23px;background:#afdc7e;"></div>
<div class="a" style="left:854px;top:456px;width:178px;height:22px;background:#fff;"></div>
<div class="a" style="left:383px;top:480px;width:197px;height:22px;background:#fff;"></div>
<div class="a" style="left:582px;top:480px;width:181px;height:22px;background:#fff;"></div>
<div class="a" style="left:763px;top:479px;width:91px;height:1px;background:#fff;"></div>
<div class="a" style="left:763px;top:480px;width:91px;height:23px;background:#ff9391;"></div>
<div class="a" style="left:854px;top:480px;width:178px;height:22px;background:#fff;"></div>
<div class="a" style="left:383px;top:504px;width:197px;height:22px;background:#fff;"></div>
<div class="a" style="left:582px;top:504px;width:181px;height:22px;background:#fff;"></div>
<div class="a" style="left:763px;top:503px;width:91px;height:1px;background:#fff;"></div>
<div class="a" style="left:763px;top:504px;width:91px;height:23px;background:#fdd676;"></div>
<div class="a" style="left:854px;top:504px;width:178px;height:22px;background:#fff;"></div>
<div class="a" style="left:383px;top:528px;width:197px;height:22px;background:#fff;"></div>
<div class="a" style="left:582px;top:528px;width:181px;height:22px;background:#fff;"></div>
<div class="a" style="left:763px;top:527px;width:91px;height:1px;background:#fff;"></div>
<div class="a" style="left:763px;top:528px;width:91px;height:23px;background:#ff9391;"></div>
<div class="a" style="left:854px;top:528px;width:178px;height:22px;background:#fff;"></div>
<div class="a" style="left:383px;top:552px;width:197px;height:22px;background:#fff;"></div>
<div class="a" style="left:582px;top:552px;width:181px;height:22px;background:#fff;"></div>
<div class="a" style="left:763px;top:551px;width:91px;height:1px;background:#fff;"></div>
<div class="a" style="left:763px;top:552px;width:91px;height:23px;background:#ff9391;"></div>
<div class="a" style="left:854px;top:552px;width:178px;height:22px;background:#fff;"></div>
<div class="a" style="left:383px;top:576px;width:197px;height:22px;background:#fff;"></div>
<div class="a" style="left:582px;top:576px;width:181px;height:22px;background:#fff;"></div>
<div class="a" style="left:763px;top:575px;width:91px;height:1px;background:#fff;"></div>
<div class="a" style="left:763px;top:576px;width:91px;height:23px;background:#ff9391;"></div>
<div class="a" style="left:854px;top:576px;width:178px;height:22px;background:#fff;"></div>
<div class="a" style="left:383px;top:600px;width:197px;height:22px;background:#fff;"></div>
<div class="a" style="left:582px;top:600px;width:181px;height:22px;background:#fff;"></div>
<div class="a" style="left:763px;top:599px;width:91px;height:1px;background:#fff;"></div>
<div class="a" style="left:763px;top:600px;width:91px;height:23px;background:#ff9391;"></div>
<div class="a" style="left:854px;top:600px;width:178px;height:22px;background:#fff;"></div>
<div class="a" style="left:383px;top:624px;width:197px;height:36px;background:#fff;"></div>
<div class="a" style="left:582px;top:624px;width:181px;height:36px;background:#fff;"></div>
<div class="a" style="left:763px;top:623px;width:91px;height:1px;background:#fff;"></div>
<div class="a" style="left:763px;top:624px;width:91px;height:37px;background:#ff9391;"></div>
<div class="a" style="left:854px;top:624px;width:178px;height:36px;background:#fff;"></div>
<div class="a" style="left:383px;top:662px;width:197px;height:22px;background:#fff;"></div>
<div class="a" style="left:582px;top:662px;width:179px;height:22px;background:#fff;"></div>
<div class="a" style="left:763px;top:662px;width:90px;height:22px;background:#fff;"></div>
<div class="a" style="left:855px;top:662px;width:177px;height:22px;background:#fff;"></div>
<div class="a" style="left:383px;top:686px;width:197px;height:22px;background:#fff;"></div>
<div class="a" style="left:582px;top:686px;width:179px;height:22px;background:#fff;"></div>
<div class="a" style="left:763px;top:686px;width:90px;height:22px;background:#fff;"></div>
<div class="a" style="left:855px;top:686px;width:177px;height:22px;background:#fff;"></div>
<div class="cell" style="left:64px;top:168px;width:318px;height:24px;color:#1a0aff;">Install software drivers</div>
<div class="cell" style="left:382px;top:168px;width:199px;height:24px;color:#1a0aff;">Helpdesk support tracker</div>
<div class="cell" style="left:581px;top:168px;width:181px;height:24px;color:#1a0aff;">Done</div>
<div class="cell" style="left:762px;top:168px;width:92px;height:24px;color:#000;">Low</div>
<div class="cell" style="left:854px;top:168px;width:179px;height:24px;color:#1a0aff;">John Smith</div>
<div class="cell" style="left:1033px;top:168px;width:129px;height:24px;color:#1a0aff;">02/02/2023</div>
<div class="cell" style="left:1162px;top:168px;width:129px;height:24px;color:#1a0aff;">02/24/2023</div>
<div class="cell" style="left:1291px;top:168px;width:129px;height:24px;color:#1a0aff;">02/14/2023</div>
<div class="cell" style="left:1550px;top:168px;width:156px;height:24px;color:#1a0aff;">107</div>
<div class="cell" style="left:1706px;top:168px;width:145px;height:24px;color:#1a0aff;">100</div>
<div class="a" style="left:1422px;top:169px;width:127px;height:20px;background:#b4cdf7;"></div>
<svg class="a" style="left:1459.5px;top:175px" width="11" height="10" viewBox="0 0 11 10"><path d="M5.3 0 L10.6 10 L0 10 Z" fill="#000"/></svg>
<div class="t" style="left:1476.68px;top:172.83px;font-size:14.67px;line-height:14.67px;color:#000;">100%</div>
<div class="cell" style="left:64px;top:192px;width:318px;height:24px;color:#1a0aff;">Backup data</div>
<div class="cell" style="left:382px;top:192px;width:199px;height:24px;color:#1a0aff;">Sales tracker</div>
<div class="cell" style="left:581px;top:192px;width:181px;height:24px;color:#1a0aff;">Done</div>
<div class="cell" style="left:762px;top:192px;width:92px;height:24px;color:#000;">Low</div>
<div class="cell" style="left:854px;top:192px;width:179px;height:24px;color:#1a0aff;">Colin Martin</div>
<div class="cell" style="left:1033px;top:192px;width:129px;height:24px;color:#1a0aff;">01/19/2023</div>
<div class="cell" style="left:1162px;top:192px;width:129px;height:24px;color:#1a0aff;">02/24/2023</div>
<div class="cell" style="left:1291px;top:192px;width:129px;height:24px;color:#1a0aff;">03/04/2023</div>
<div class="cell" style="left:1550px;top:192px;width:156px;height:24px;color:#1a0aff;">145</div>
<div class="cell" style="left:1706px;top:192px;width:145px;height:24px;color:#1a0aff;">150</div>
<div class="a" style="left:1422px;top:193px;width:127px;height:20px;background:#b4cdf7;"></div>
<svg class="a" style="left:1459.5px;top:199px" width="11" height="10" viewBox="0 0 11 10"><path d="M5.3 0 L10.6 10 L0 10 Z" fill="#000"/></svg>
<div class="t" style="left:1476.68px;top:196.83px;font-size:14.67px;line-height:14.67px;color:#000;">100%</div>
<div class="cell" style="left:64px;top:216px;width:318px;height:24px;color:#1a0aff;">QA data backup</div>
<div class="cell" style="left:382px;top:216px;width:199px;height:24px;color:#1a0aff;">Calendar</div>
<div class="cell" style="left:581px;top:216px;width:181px;height:24px;color:#1a0aff;">Done</div>
<div class="cell" style="left:762px;top:216px;width:92px;height:24px;color:#000;">Low</div>
<div class="cell" style="left:854px;top:216px;width:179px;height:24px;color:#1a0aff;">Mandy Apostolopoulou</div>
<div class="cell" style="left:1033px;top:216px;width:129px;height:24px;color:#1a0aff;">02/17/2023</div>
<div class="cell" style="left:1162px;top:216px;width:129px;height:24px;color:#1a0aff;">03/02/2023</div>
<div class="cell" style="left:1291px;top:216px;width:129px;height:24px;color:#1a0aff;">02/28/2023</div>
<div class="cell" style="left:1550px;top:216px;width:156px;height:24px;color:#1a0aff;">139</div>
<div class="cell" style="left:1706px;top:216px;width:145px;height:24px;color:#1a0aff;">145</div>
<div class="a" style="left:1422px;top:217px;width:127px;height:20px;background:#b4cdf7;"></div>
<svg class="a" style="left:1459.5px;top:223px" width="11" height="10" viewBox="0 0 11 10"><path d="M5.3 0 L10.6 10 L0 10 Z" fill="#000"/></svg>
<div class="t" style="left:1476.68px;top:220.83px;font-size:14.67px;line-height:14.67px;color:#000;">100%</div>
<div class="cell" style="left:64px;top:240px;width:318px;height:24px;color:#1a0aff;">Schedule interviews with devops</div>
<div class="cell" style="left:382px;top:240px;width:199px;height:24px;color:#1a0aff;">Calendar</div>
<div class="cell" style="left:581px;top:240px;width:181px;height:24px;color:#1a0aff;">Done</div>
<div class="cell" style="left:762px;top:240px;width:92px;height:24px;color:#000;">High</div>
<div class="cell" style="left:854px;top:240px;width:179px;height:24px;color:#1a0aff;">Andy Fielder</div>
<div class="cell" style="left:1033px;top:240px;width:129px;height:24px;color:#1a0aff;">02/20/2023</div>
<div class="cell" style="left:1162px;top:240px;width:129px;height:24px;color:#1a0aff;">02/22/2023</div>
<div class="cell" style="left:1291px;top:240px;width:129px;height:24px;color:#1a0aff;">02/25/2023</div>
<div class="cell" style="left:1550px;top:240px;width:156px;height:24px;color:#1a0aff;">66</div>
<div class="cell" style="left:1706px;top:240px;width:145px;height:24px;color:#1a0aff;">60</div>
<div class="a" style="left:1422px;top:241px;width:127px;height:20px;background:#b4cdf7;"></div>
<svg class="a" style="left:1459.5px;top:247px" width="11" height="10" viewBox="0 0 11 10"><path d="M5.3 0 L10.6 10 L0 10 Z" fill="#000"/></svg>
<div class="t" style="left:1476.68px;top:244.83px;font-size:14.67px;line-height:14.67px;color:#000;">100%</div>
<div class="cell" style="left:64px;top:264px;width:318px;height:24px;color:#1a0aff;">Complete server transfer</div>
<div class="cell" style="left:382px;top:264px;width:199px;height:24px;color:#1a0aff;">Accounts</div>
<div class="cell" style="left:581px;top:264px;width:181px;height:24px;color:#1a0aff;">Done</div>
<div class="cell" style="left:762px;top:264px;width:92px;height:24px;color:#000;">Medium</div>
<div class="cell" style="left:854px;top:264px;width:179px;height:24px;color:#1a0aff;">Konrad Nathanson</div>
<div class="cell" style="left:1033px;top:264px;width:129px;height:24px;color:#1a0aff;">03/08/2023</div>
<div class="cell" style="left:1162px;top:264px;width:129px;height:24px;color:#1a0aff;">04/21/2023</div>
<div class="cell" style="left:1291px;top:264px;width:129px;height:24px;color:#1a0aff;">08/10/2023</div>
<div class="cell" style="left:1550px;top:264px;width:156px;height:24px;color:#1a0aff;">131</div>
<div class="cell" style="left:1706px;top:264px;width:145px;height:24px;color:#1a0aff;">120</div>
<div class="a" style="left:1422px;top:265px;width:127px;height:20px;background:#b4cdf7;"></div>
<svg class="a" style="left:1459.5px;top:271px" width="11" height="10" viewBox="0 0 11 10"><path d="M5.3 0 L10.6 10 L0 10 Z" fill="#000"/></svg>
<div class="t" style="left:1476.68px;top:268.83px;font-size:14.67px;line-height:14.67px;color:#000;">100%</div>
<div class="cell" style="left:64px;top:288px;width:318px;height:24px;color:#1a0aff;">Facilitate reupload of critical workflows</div>
<div class="cell" style="left:382px;top:288px;width:199px;height:24px;color:#1a0aff;">Calendar</div>
<div class="cell" style="left:581px;top:288px;width:181px;height:24px;color:#1a0aff;">Q&amp;A</div>
<div class="cell" style="left:762px;top:288px;width:92px;height:24px;color:#000;">Low</div>
<div class="cell" style="left:854px;top:288px;width:179px;height:24px;color:#1a0aff;">Konrad Nathanson</div>
<div class="cell" style="left:1033px;top:288px;width:129px;height:24px;color:#1a0aff;">03/23/2023</div>
<div class="cell" style="left:1162px;top:288px;width:129px;height:24px;color:#1a0aff;">03/31/2023</div>
<div class="cell" style="left:1550px;top:288px;width:156px;height:24px;color:#1a0aff;">77</div>
<div class="cell" style="left:1706px;top:288px;width:145px;height:24px;color:#1a0aff;">80</div>
<div class="a" style="left:1422px;top:289px;width:76px;height:20px;background:#b4cdf7;"></div>
<svg class="a" style="left:1463.5px;top:295px" width="11" height="10" viewBox="0 0 11 10"><path d="M5.3 0 L10.6 10 L0 10 Z" fill="#000"/></svg>
<div class="t" style="left:1480.97px;top:292.83px;font-size:14.67px;line-height:14.67px;color:#000;">60%</div>
<div class="cell" style="left:64px;top:312px;width:318px;height:24px;color:#1a0aff;">Ensure network is usable</div>
<div class="cell" style="left:382px;top:312px;width:199px;height:24px;color:#1a0aff;">Accounts</div>
<div class="cell" style="left:581px;top:312px;width:181px;height:24px;color:#1a0aff;">Done</div>
<div class="cell" style="left:762px;top:312px;width:92px;height:24px;color:#000;">Low</div>
<div class="cell" style="left:854px;top:312px;width:179px;height:24px;color:#1a0aff;">Leslie Sorenson</div>
<div class="cell" style="left:1033px;top:312px;width:129px;height:24px;color:#1a0aff;">04/04/2023</div>
<div class="cell" style="left:1162px;top:312px;width:129px;height:24px;color:#1a0aff;">06/01/2023</div>
<div class="cell" style="left:1550px;top:312px;width:156px;height:24px;color:#1a0aff;">110</div>
<div class="cell" style="left:1706px;top:312px;width:145px;height:24px;color:#1a0aff;">120</div>
<div class="a" style="left:1422px;top:313px;width:89px;height:20px;background:#b4cdf7;"></div>
<svg class="a" style="left:1463.5px;top:319px" width="11" height="10" viewBox="0 0 11 10"><path d="M5.3 0 L10.6 10 L0 10 Z" fill="#000"/></svg>
<div class="t" style="left:1480.97px;top:316.83px;font-size:14.67px;line-height:14.67px;color:#000;">70%</div>
<div class="cell" style="left:64px;top:336px;width:318px;height:24px;color:#1a0aff;">Change log-ins of all accounts</div>
<div class="cell" style="left:382px;top:336px;width:199px;height:24px;color:#1a0aff;">Habit tracker</div>
<div class="cell" style="left:581px;top:336px;width:181px;height:24px;color:#1a0aff;">Backlog</div>
<div class="cell" style="left:762px;top:336px;width:92px;height:24px;color:#000;">Low</div>
<div class="cell" style="left:854px;top:336px;width:179px;height:24px;color:#1a0aff;">Kostas Athanasopoulos</div>
<div class="cell" style="left:1033px;top:336px;width:129px;height:24px;color:#1a0aff;">04/14/2023</div>
<div class="cell" style="left:1162px;top:336px;width:129px;height:24px;color:#1a0aff;">10/21/2023</div>
<div class="cell" style="left:1550px;top:336px;width:156px;height:24px;color:#1a0aff;">110</div>
<div class="cell" style="left:1706px;top:336px;width:145px;height:24px;color:#1a0aff;">105</div>
<div class="a" style="left:1422px;top:337px;width:76px;height:20px;background:#b4cdf7;"></div>
<svg class="a" style="left:1463.5px;top:343px" width="11" height="10" viewBox="0 0 11 10"><path d="M5.3 0 L10.6 10 L0 10 Z" fill="#000"/></svg>
<div class="t" style="left:1480.97px;top:340.83px;font-size:14.67px;line-height:14.67px;color:#000;">60%</div>
<div class="cell" style="left:64px;top:360px;width:318px;height:24px;color:#1a0aff;">Order upgraded servers</div>
<div class="cell" style="left:382px;top:360px;width:199px;height:24px;color:#1a0aff;">Accounts</div>
<div class="cell" style="left:581px;top:360px;width:181px;height:24px;color:#1a0aff;">Done</div>
<div class="cell" style="left:762px;top:360px;width:92px;height:24px;color:#000;">Low</div>
<div class="cell" style="left:854px;top:360px;width:179px;height:24px;color:#1a0aff;">Mandy Apostolopoulou</div>
<div class="cell" style="left:1033px;top:360px;width:129px;height:24px;color:#1a0aff;">04/24/2023</div>
<div class="cell" style="left:1162px;top:360px;width:129px;height:24px;color:#1a0aff;">05/23/2023</div>
<div class="cell" style="left:1291px;top:360px;width:129px;height:24px;color:#1a0aff;">05/11/2023</div>
<div class="cell" style="left:1550px;top:360px;width:156px;height:24px;color:#1a0aff;">77</div>
<div class="cell" style="left:1706px;top:360px;width:145px;height:24px;color:#1a0aff;">80</div>
<div class="a" style="left:1422px;top:361px;width:127px;height:20px;background:#b4cdf7;"></div>
<svg class="a" style="left:1459.5px;top:367px" width="11" height="10" viewBox="0 0 11 10"><path d="M5.3 0 L10.6 10 L0 10 Z" fill="#000"/></svg>
<div class="t" style="left:1476.68px;top:364.83px;font-size:14.67px;line-height:14.67px;color:#000;">100%</div>
<div class="cell" style="left:64px;top:384px;width:318px;height:24px;color:#1a0aff;">Configure server settings</div>
<div class="cell" style="left:382px;top:384px;width:199px;height:24px;color:#1a0aff;">Accounts</div>
<div class="cell" style="left:581px;top:384px;width:181px;height:24px;color:#1a0aff;">Hold before final</div>
<div class="cell" style="left:762px;top:384px;width:92px;height:24px;color:#000;">Medium</div>
<div class="cell" style="left:854px;top:384px;width:179px;height:24px;color:#1a0aff;">Konrad Nathanson</div>
<div class="cell" style="left:1033px;top:384px;width:129px;height:24px;color:#1a0aff;">05/19/2023</div>
<div class="cell" style="left:1162px;top:384px;width:129px;height:24px;color:#1a0aff;">06/15/2023</div>
<div class="cell" style="left:1550px;top:384px;width:156px;height:24px;color:#1a0aff;">122</div>
<div class="cell" style="left:1706px;top:384px;width:145px;height:24px;color:#1a0aff;">100</div>
<div class="a" style="left:1422px;top:385px;width:89px;height:20px;background:#b4cdf7;"></div>
<svg class="a" style="left:1463.5px;top:391px" width="11" height="10" viewBox="0 0 11 10"><path d="M5.3 0 L10.6 10 L0 10 Z" fill="#000"/></svg>
<div class="t" style="left:1480.97px;top:388.83px;font-size:14.67px;line-height:14.67px;color:#000;">70%</div>
<div class="cell" style="left:64px;top:408px;width:318px;height:24px;color:#1a0aff;">Project check-in meeting</div>
<div class="cell" style="left:382px;top:408px;width:199px;height:24px;color:#1a0aff;">Calendar</div>
<div class="cell" style="left:581px;top:408px;width:181px;height:24px;color:#1a0aff;">In-Progress</div>
<div class="cell" style="left:762px;top:408px;width:92px;height:24px;color:#000;">Medium</div>
<div class="cell" style="left:854px;top:408px;width:179px;height:24px;color:#1a0aff;">John Smith</div>
<div class="cell" style="left:1033px;top:408px;width:129px;height:24px;color:#1a0aff;">05/21/2023</div>
<div class="cell" style="left:1162px;top:408px;width:129px;height:24px;color:#1a0aff;">06/22/2023</div>
<div class="cell" style="left:1550px;top:408px;width:156px;height:24px;color:#1a0aff;">55</div>
<div class="cell" style="left:1706px;top:408px;width:145px;height:24px;color:#1a0aff;">70</div>
<div class="a" style="left:1422px;top:409px;width:127px;height:20px;background:#b4cdf7;"></div>
<svg class="a" style="left:1459.5px;top:415px" width="11" height="10" viewBox="0 0 11 10"><path d="M5.3 0 L10.6 10 L0 10 Z" fill="#000"/></svg>
<div class="t" style="left:1476.68px;top:412.83px;font-size:14.67px;line-height:14.67px;color:#000;">100%</div>
<div class="cell" style="left:64px;top:432px;width:318px;height:24px;color:#1a0aff;">Create new log-ins for users</div>
<div class="cell" style="left:382px;top:432px;width:199px;height:24px;color:#1a0aff;">Helpdesk support tracker</div>
<div class="cell" style="left:581px;top:432px;width:181px;height:24px;color:#1a0aff;">Backlog</div>
<div class="cell" style="left:762px;top:432px;width:92px;height:24px;color:#000;">Low</div>
<div class="cell" style="left:854px;top:432px;width:179px;height:24px;color:#1a0aff;">Colin Martin</div>
<div class="cell" style="left:1033px;top:432px;width:129px;height:24px;color:#1a0aff;">01/18/2023</div>
<div class="cell" style="left:1162px;top:432px;width:129px;height:24px;color:#1a0aff;">02/08/2023</div>
<div class="cell" style="left:1550px;top:432px;width:156px;height:24px;color:#1a0aff;">64</div>
<div class="cell" style="left:1706px;top:432px;width:145px;height:24px;color:#1a0aff;">65</div>
<div class="a" style="left:1422px;top:433px;width:51px;height:20px;background:#b4cdf7;"></div>
<svg class="a" style="left:1463.5px;top:439px" width="11" height="10" viewBox="0 0 11 10"><path d="M5.3 0 L10.6 10 L0 10 Z" fill="#000"/></svg>
<div class="t" style="left:1481.19px;top:436.83px;font-size:14.67px;line-height:14.67px;color:#000;">40%</div>
<div class="cell" style="left:64px;top:456px;width:318px;height:24px;color:#1a0aff;">Test new start project workflow</div>
<div class="cell" style="left:382px;top:456px;width:199px;height:24px;color:#1a0aff;">Helpdesk support tracker</div>
<div class="cell" style="left:581px;top:456px;width:181px;height:24px;color:#1a0aff;">Backlog</div>
<div class="cell" style="left:762px;top:456px;width:92px;height:24px;color:#000;">Low</div>
<div class="cell" style="left:854px;top:456px;width:179px;height:24px;color:#1a0aff;">Kostas Athanasopoulos</div>
<div class="cell" style="left:1033px;top:456px;width:129px;height:24px;color:#1a0aff;">01/31/2023</div>
<div class="cell" style="left:1162px;top:456px;width:129px;height:24px;color:#1a0aff;">02/08/2023</div>
<div class="cell" style="left:1550px;top:456px;width:156px;height:24px;color:#1a0aff;">64</div>
<div class="cell" style="left:1706px;top:456px;width:145px;height:24px;color:#1a0aff;">60</div>
<div class="a" style="left:1422px;top:457px;width:51px;height:20px;background:#b4cdf7;"></div>
<svg class="a" style="left:1463.5px;top:463px" width="11" height="10" viewBox="0 0 11 10"><path d="M5.3 0 L10.6 10 L0 10 Z" fill="#000"/></svg>
<div class="t" style="left:1481.19px;top:460.83px;font-size:14.67px;line-height:14.67px;color:#000;">40%</div>
<div class="cell" style="left:64px;top:480px;width:318px;height:24px;color:#1a0aff;">Test fake data</div>
<div class="cell" style="left:382px;top:480px;width:199px;height:24px;color:#1a0aff;">Helpdesk support tracker</div>
<div class="cell" style="left:581px;top:480px;width:181px;height:24px;color:#1a0aff;">Research</div>
<div class="cell" style="left:762px;top:480px;width:92px;height:24px;color:#000;">High</div>
<div class="cell" style="left:854px;top:480px;width:179px;height:24px;color:#1a0aff;">Mandy Apostolopoulou</div>
<div class="cell" style="left:1033px;top:480px;width:129px;height:24px;color:#1a0aff;">06/16/2023</div>
<div class="cell" style="left:1162px;top:480px;width:129px;height:24px;color:#1a0aff;">06/28/2023</div>
<div class="cell" style="left:1550px;top:480px;width:156px;height:24px;color:#1a0aff;">64</div>
<div class="cell" style="left:1706px;top:480px;width:145px;height:24px;color:#1a0aff;">70</div>
<div class="a" style="left:1422px;top:481px;width:51px;height:20px;background:#b4cdf7;"></div>
<svg class="a" style="left:1463.5px;top:487px" width="11" height="10" viewBox="0 0 11 10"><path d="M5.3 0 L10.6 10 L0 10 Z" fill="#000"/></svg>
<div class="t" style="left:1481.19px;top:484.83px;font-size:14.67px;line-height:14.67px;color:#000;">40%</div>
<div class="cell" style="left:64px;top:504px;width:318px;height:24px;color:#1a0aff;">Setup system firewalls</div>
<div class="cell" style="left:382px;top:504px;width:199px;height:24px;color:#1a0aff;">Helpdesk support tracker</div>
<div class="cell" style="left:581px;top:504px;width:181px;height:24px;color:#1a0aff;">Done</div>
<div class="cell" style="left:762px;top:504px;width:92px;height:24px;color:#000;">Medium</div>
<div class="cell" style="left:854px;top:504px;width:179px;height:24px;color:#1a0aff;">Konrad Nathanson</div>
<div class="cell" style="left:1033px;top:504px;width:129px;height:24px;color:#1a0aff;">06/23/2023</div>
<div class="cell" style="left:1162px;top:504px;width:129px;height:24px;color:#1a0aff;">07/18/2023</div>
<div class="cell" style="left:1291px;top:504px;width:129px;height:24px;color:#1a0aff;">07/07/2023</div>
<div class="cell" style="left:1550px;top:504px;width:156px;height:24px;color:#1a0aff;">25</div>
<div class="cell" style="left:1706px;top:504px;width:145px;height:24px;color:#1a0aff;">30</div>
<div class="a" style="left:1422px;top:505px;width:127px;height:20px;background:#b4cdf7;"></div>
<svg class="a" style="left:1459.5px;top:511px" width="11" height="10" viewBox="0 0 11 10"><path d="M5.3 0 L10.6 10 L0 10 Z" fill="#000"/></svg>
<div class="t" style="left:1476.68px;top:508.83px;font-size:14.67px;line-height:14.67px;color:#000;">100%</div>
<div class="cell" style="left:64px;top:528px;width:318px;height:24px;color:#1a0aff;">Update cybersecurity protocols</div>
<div class="cell" style="left:382px;top:528px;width:199px;height:24px;color:#1a0aff;">Accounts</div>
<div class="cell" style="left:581px;top:528px;width:181px;height:24px;color:#1a0aff;">Q&amp;A</div>
<div class="cell" style="left:762px;top:528px;width:92px;height:24px;color:#000;">High</div>
<div class="cell" style="left:854px;top:528px;width:179px;height:24px;color:#1a0aff;">John Smith</div>
<div class="cell" style="left:1033px;top:528px;width:129px;height:24px;color:#1a0aff;">07/27/2023</div>
<div class="cell" style="left:1162px;top:528px;width:129px;height:24px;color:#1a0aff;">08/18/2023</div>
<div class="cell" style="left:1550px;top:528px;width:156px;height:24px;color:#1a0aff;">5</div>
<div class="cell" style="left:1706px;top:528px;width:145px;height:24px;color:#1a0aff;">7</div>
<div class="a" style="left:1422px;top:529px;width:19px;height:20px;background:#b4cdf7;"></div>
<svg class="a" style="left:1464.0px;top:535px" width="11" height="10" viewBox="0 0 11 10"><path d="M5.3 0 L10.6 10 L0 10 Z" fill="#000"/></svg>
<div class="t" style="left:1480.79px;top:532.83px;font-size:14.67px;line-height:14.67px;color:#000;">15%</div>
<div class="cell" style="left:64px;top:552px;width:318px;height:24px;color:#1a0aff;">Upload machine learning model data</div>
<div class="cell" style="left:382px;top:552px;width:199px;height:24px;color:#1a0aff;">Sales tracker</div>
<div class="cell" style="left:581px;top:552px;width:181px;height:24px;color:#1a0aff;">Q&amp;A</div>
<div class="cell" style="left:762px;top:552px;width:92px;height:24px;color:#000;">High</div>
<div class="cell" style="left:854px;top:552px;width:179px;height:24px;color:#1a0aff;">John Smith</div>
<div class="cell" style="left:1033px;top:552px;width:129px;height:24px;color:#1a0aff;">08/24/2023</div>
<div class="cell" style="left:1162px;top:552px;width:129px;height:24px;color:#1a0aff;">09/25/2023</div>
<div class="cell" style="left:1550px;top:552px;width:156px;height:24px;color:#1a0aff;">45</div>
<div class="cell" style="left:1706px;top:552px;width:145px;height:24px;color:#1a0aff;">10</div>
<div class="a" style="left:1422px;top:553px;width:13px;height:20px;background:#b4cdf7;"></div>
<svg class="a" style="left:1464.0px;top:559px" width="11" height="10" viewBox="0 0 11 10"><path d="M5.3 0 L10.6 10 L0 10 Z" fill="#000"/></svg>
<div class="t" style="left:1480.79px;top:556.83px;font-size:14.67px;line-height:14.67px;color:#000;">10%</div>
<div class="cell" style="left:64px;top:576px;width:318px;height:24px;color:#1a0aff;">Test ML system on new dataset</div>
<div class="cell" style="left:382px;top:576px;width:199px;height:24px;color:#1a0aff;">Helpdesk support tracker</div>
<div class="cell" style="left:581px;top:576px;width:181px;height:24px;color:#1a0aff;">Research</div>
<div class="cell" style="left:762px;top:576px;width:92px;height:24px;color:#000;">High</div>
<div class="cell" style="left:854px;top:576px;width:179px;height:24px;color:#1a0aff;">Konrad Nathanson</div>
<div class="cell" style="left:1033px;top:576px;width:129px;height:24px;color:#1a0aff;">08/14/2023</div>
<div class="cell" style="left:1162px;top:576px;width:129px;height:24px;color:#1a0aff;">12/14/2023</div>
<div class="cell" style="left:1550px;top:576px;width:156px;height:24px;color:#1a0aff;">30</div>
<div class="cell" style="left:1706px;top:576px;width:145px;height:24px;color:#1a0aff;">30</div>
<div class="a" style="left:1422px;top:577px;width:13px;height:20px;background:#b4cdf7;"></div>
<svg class="a" style="left:1464.0px;top:583px" width="11" height="10" viewBox="0 0 11 10"><path d="M5.3 0 L10.6 10 L0 10 Z" fill="#000"/></svg>
<div class="t" style="left:1480.79px;top:580.83px;font-size:14.67px;line-height:14.67px;color:#000;">10%</div>
<div class="cell" style="left:64px;top:600px;width:318px;height:24px;color:#1a0aff;">Set up bug-bounty for critical flaws</div>
<div class="cell" style="left:382px;top:600px;width:199px;height:24px;color:#1a0aff;">Helpdesk support tracker</div>
<div class="cell" style="left:581px;top:600px;width:181px;height:24px;color:#1a0aff;">In-Progress</div>
<div class="cell" style="left:762px;top:600px;width:92px;height:24px;color:#000;">High</div>
<div class="cell" style="left:854px;top:600px;width:179px;height:24px;color:#1a0aff;">Colin Martin</div>
<div class="cell" style="left:1033px;top:600px;width:129px;height:24px;color:#1a0aff;">09/06/2023</div>
<div class="cell" style="left:1162px;top:600px;width:129px;height:24px;color:#1a0aff;">11/30/2023</div>
<div class="cell" style="left:1550px;top:600px;width:156px;height:24px;color:#1a0aff;">25</div>
<div class="cell" style="left:1706px;top:600px;width:145px;height:24px;color:#1a0aff;">30</div>
<div class="a" style="left:1422px;top:601px;width:13px;height:20px;background:#b4cdf7;"></div>
<svg class="a" style="left:1464.0px;top:607px" width="11" height="10" viewBox="0 0 11 10"><path d="M5.3 0 L10.6 10 L0 10 Z" fill="#000"/></svg>
<div class="t" style="left:1480.79px;top:604.83px;font-size:14.67px;line-height:14.67px;color:#000;">10%</div>
<div class="cell" style="left:64px;top:624px;width:318px;height:38px;color:#1a0aff;text-align:center;line-height:19px;">Prepare notes for lecture ΠΡΑΚΤΙΚΗ<br>ΕΦΑΡΜΟΓΗ ΣΤΗΝ ΕΙΔΙΚΟΤΗΤΑ</div>
<div class="cell" style="left:382px;top:624px;width:199px;height:38px;color:#1a0aff;text-align:center;line-height:19px;">Teaching</div>
<div class="cell" style="left:581px;top:624px;width:181px;height:38px;color:#1a0aff;text-align:center;line-height:19px;">In-Progress</div>
<div class="cell" style="left:762px;top:624px;width:92px;height:38px;color:#000;text-align:center;line-height:19px;">High</div>
<div class="cell" style="left:854px;top:624px;width:179px;height:38px;color:#1a0aff;text-align:center;line-height:19px;">Tryfon Papadopoulos</div>
<div class="cell" style="left:1033px;top:624px;width:129px;height:38px;color:#1a0aff;text-align:center;line-height:19px;">02/20/2026</div>
<div class="cell" style="left:1162px;top:624px;width:129px;height:38px;color:#1a0aff;text-align:center;line-height:19px;">02/20/2026</div>
<div class="cell" style="left:1550px;top:624px;width:156px;height:38px;color:#1a0aff;text-align:center;line-height:19px;">1</div>
<div class="a" style="left:853px;top:478px;width:182px;height:27px;border:2px solid #1a6b3c"></div>
<div class="a" style="left:1034px;top:485px;width:17px;height:18px;background:linear-gradient(#fafbfc,#eef1f5);border:1px solid #a8aeb6"></div>
<svg class="a" style="left:1039px;top:492px" width="8" height="5" viewBox="0 0 8 5"><path d="M0 0 L8 0 L4 4.5 Z" fill="#666"/></svg>
<div class="a" style="left:1031px;top:501px;width:6px;height:6px;background:#1a6b3c;"></div>
</div>
<div class="a" style="left:0px;top:270px;width:18px;height:700px;background:#555555;"></div>
<div class="a" style="left:0px;top:286px;width:17px;height:1px;background:#b8b8b8;"></div>
<div class="t" style="left:1.86px;top:270.57px;font-size:13.8px;line-height:13.8px;color:#fff;">1</div>
<div class="a" style="left:0px;top:319px;width:17px;height:1px;background:#b8b8b8;"></div>
<div class="t" style="left:2.07px;top:303.57px;font-size:13.8px;line-height:13.8px;color:#fff;">2</div>
<div class="a" style="left:0px;top:345px;width:17px;height:1px;background:#b8b8b8;"></div>
<div class="t" style="left:2.11px;top:329.57px;font-size:13.8px;line-height:13.8px;color:#fff;">3</div>
<div class="a" style="left:0px;top:363px;width:17px;height:1px;background:#b8b8b8;"></div>
<div class="t" style="left:2.11px;top:347.57px;font-size:13.8px;line-height:13.8px;color:#fff;">4</div>
<div class="a" style="left:0px;top:387px;width:17px;height:1px;background:#b8b8b8;"></div>
<div class="t" style="left:2.07px;top:371.57px;font-size:13.8px;line-height:13.8px;color:#fff;">5</div>
<div class="a" style="left:0px;top:411px;width:17px;height:1px;background:#b8b8b8;"></div>
<div class="t" style="left:2.00px;top:395.57px;font-size:13.8px;line-height:13.8px;color:#fff;">6</div>
<div class="a" style="left:0px;top:437px;width:17px;height:1px;background:#b8b8b8;"></div>
<div class="t" style="left:2.07px;top:421.57px;font-size:13.8px;line-height:13.8px;color:#fff;">7</div>
<div class="a" style="left:0px;top:461px;width:17px;height:1px;background:#b8b8b8;"></div>
<div class="t" style="left:2.07px;top:445.57px;font-size:13.8px;line-height:13.8px;color:#fff;">9</div>
<div class="a" style="left:0px;top:485px;width:17px;height:1px;background:#b8b8b8;"></div>
<div class="t" style="left:-2.04px;top:469.57px;font-size:13.8px;line-height:13.8px;color:#fff;">10</div>
<div class="a" style="left:0px;top:509px;width:17px;height:1px;background:#b8b8b8;"></div>
<div class="t" style="left:-1.45px;top:493.57px;font-size:13.8px;line-height:13.8px;color:#fff;">11</div>
<div class="a" style="left:0px;top:533px;width:17px;height:1px;background:#b8b8b8;"></div>
<div class="t" style="left:-1.93px;top:517.57px;font-size:13.8px;line-height:13.8px;color:#fff;">12</div>
<div class="a" style="left:0px;top:557px;width:17px;height:1px;background:#b8b8b8;"></div>
<div class="t" style="left:-2.00px;top:541.57px;font-size:13.8px;line-height:13.8px;color:#fff;">13</div>
<div class="a" style="left:0px;top:581px;width:17px;height:1px;background:#b8b8b8;"></div>
<div class="t" style="left:-2.10px;top:565.57px;font-size:13.8px;line-height:13.8px;color:#fff;">14</div>
<div class="a" style="left:0px;top:605px;width:17px;height:1px;background:#b8b8b8;"></div>
<div class="t" style="left:-2.00px;top:589.57px;font-size:13.8px;line-height:13.8px;color:#fff;">15</div>
<div class="a" style="left:0px;top:629px;width:17px;height:1px;background:#b8b8b8;"></div>
<div class="t" style="left:-2.00px;top:613.57px;font-size:13.8px;line-height:13.8px;color:#fff;">16</div>
<div class="a" style="left:0px;top:653px;width:17px;height:1px;background:#b8b8b8;"></div>
<div class="t" style="left:-1.93px;top:637.57px;font-size:13.8px;line-height:13.8px;color:#fff;">17</div>
<div class="a" style="left:0px;top:677px;width:17px;height:1px;background:#b8b8b8;"></div>
<div class="t" style="left:-2.00px;top:661.57px;font-size:13.8px;line-height:13.8px;color:#fff;">18</div>
<div class="a" style="left:0px;top:701px;width:17px;height:1px;background:#b8b8b8;"></div>
<div class="t" style="left:-1.97px;top:685.57px;font-size:13.8px;line-height:13.8px;color:#fff;">19</div>
<div class="a" style="left:0px;top:725px;width:17px;height:1px;background:#b8b8b8;"></div>
<div class="t" style="left:-1.86px;top:709.57px;font-size:13.8px;line-height:13.8px;color:#fff;">20</div>
<div class="a" style="left:0px;top:749px;width:17px;height:1px;background:#b8b8b8;"></div>
<div class="t" style="left:-1.79px;top:733.57px;font-size:13.8px;line-height:13.8px;color:#fff;">21</div>
<div class="a" style="left:0px;top:749px;width:18px;height:24px;background:#656565;"></div>
<div class="a" style="left:17px;top:749px;width:2px;height:24px;background:#157a3c;"></div>
<div class="a" style="left:0px;top:773px;width:17px;height:1px;background:#b8b8b8;"></div>
<div class="t" style="left:-1.76px;top:757.57px;font-size:13.8px;line-height:13.8px;color:#fff;">22</div>
<div class="a" style="left:0px;top:797px;width:17px;height:1px;background:#b8b8b8;"></div>
<div class="t" style="left:-1.83px;top:781.57px;font-size:13.8px;line-height:13.8px;color:#fff;">23</div>
<div class="a" style="left:0px;top:821px;width:17px;height:1px;background:#b8b8b8;"></div>
<div class="t" style="left:-1.93px;top:805.57px;font-size:13.8px;line-height:13.8px;color:#fff;">24</div>
<div class="a" style="left:0px;top:845px;width:17px;height:1px;background:#b8b8b8;"></div>
<div class="t" style="left:-1.83px;top:829.57px;font-size:13.8px;line-height:13.8px;color:#fff;">25</div>
<div class="a" style="left:0px;top:869px;width:17px;height:1px;background:#b8b8b8;"></div>
<div class="t" style="left:-1.83px;top:853.57px;font-size:13.8px;line-height:13.8px;color:#fff;">26</div>
<div class="a" style="left:0px;top:893px;width:17px;height:1px;background:#b8b8b8;"></div>
<div class="t" style="left:-1.76px;top:877.57px;font-size:13.8px;line-height:13.8px;color:#fff;">27</div>
<div class="a" style="left:0px;top:931px;width:17px;height:1px;background:#b8b8b8;"></div>
<div class="t" style="left:-1.83px;top:915.57px;font-size:13.8px;line-height:13.8px;color:#fff;">28</div>
<div class="a" style="left:0px;top:955px;width:17px;height:1px;background:#b8b8b8;"></div>
<div class="t" style="left:-1.79px;top:939.57px;font-size:13.8px;line-height:13.8px;color:#fff;">29</div>
<div class="t" style="left:-1.76px;top:963.57px;font-size:13.8px;line-height:13.8px;color:#fff;">30</div>
<div class="a" style="left:18px;top:254px;width:1px;height:716px;background:#a8a8a8;"></div>
<div class="a" style="left:0px;top:270px;width:1871px;height:1px;background:#a8a8a8;"></div>
<div class="t" style="left:18px;top:255px;width:28px;text-align:center;font-size:13.5px;color:#fff;line-height:15px">A</div>
<div class="a" style="left:46px;top:254px;width:1px;height:15px;background:#c8c8c8;"></div>
<div class="t" style="left:46px;top:255px;width:18px;text-align:center;font-size:13.5px;color:#fff;line-height:15px">B</div>
<div class="a" style="left:64px;top:254px;width:1px;height:15px;background:#c8c8c8;"></div>
<div class="t" style="left:64px;top:255px;width:318px;text-align:center;font-size:13.5px;color:#fff;line-height:15px">C</div>
<div class="a" style="left:382px;top:254px;width:1px;height:15px;background:#c8c8c8;"></div>
<div class="t" style="left:382px;top:255px;width:199px;text-align:center;font-size:13.5px;color:#fff;line-height:15px">D</div>
<div class="a" style="left:581px;top:254px;width:1px;height:15px;background:#c8c8c8;"></div>
<div class="t" style="left:581px;top:255px;width:181px;text-align:center;font-size:13.5px;color:#fff;line-height:15px">E</div>
<div class="a" style="left:762px;top:254px;width:1px;height:15px;background:#c8c8c8;"></div>
<div class="t" style="left:762px;top:255px;width:92px;text-align:center;font-size:13.5px;color:#fff;line-height:15px">F</div>
<div class="a" style="left:854px;top:254px;width:179px;height:16px;background:#656565;"></div>
<div class="a" style="left:854px;top:269px;width:179px;height:2px;background:#157a3c;"></div>
<div class="a" style="left:854px;top:254px;width:1px;height:15px;background:#c8c8c8;"></div>
<div class="t" style="left:854px;top:255px;width:179px;text-align:center;font-size:13.5px;color:#fff;line-height:15px">G</div>
<div class="a" style="left:1033px;top:254px;width:1px;height:15px;background:#c8c8c8;"></div>
<div class="t" style="left:1033px;top:255px;width:129px;text-align:center;font-size:13.5px;color:#fff;line-height:15px">H</div>
<div class="a" style="left:1162px;top:254px;width:1px;height:15px;background:#c8c8c8;"></div>
<div class="t" style="left:1162px;top:255px;width:129px;text-align:center;font-size:13.5px;color:#fff;line-height:15px">I</div>
<div class="a" style="left:1291px;top:254px;width:1px;height:15px;background:#c8c8c8;"></div>
<div class="t" style="left:1291px;top:255px;width:129px;text-align:center;font-size:13.5px;color:#fff;line-height:15px">J</div>
<div class="a" style="left:1420px;top:254px;width:1px;height:15px;background:#c8c8c8;"></div>
<div class="t" style="left:1420px;top:255px;width:130px;text-align:center;font-size:13.5px;color:#fff;line-height:15px">K</div>
<div class="a" style="left:1550px;top:254px;width:1px;height:15px;background:#c8c8c8;"></div>
<div class="t" style="left:1550px;top:255px;width:156px;text-align:center;font-size:13.5px;color:#fff;line-height:15px">L</div>
<div class="a" style="left:1706px;top:254px;width:1px;height:15px;background:#c8c8c8;"></div>
<div class="t" style="left:1706px;top:255px;width:145px;text-align:center;font-size:13.5px;color:#fff;line-height:15px">M</div>
<div class="a" style="left:1851px;top:254px;width:1px;height:15px;background:#c8c8c8;"></div>
<div class="t" style="left:1851px;top:255px;width:99px;text-align:center;font-size:13.5px;color:#fff;line-height:15px">N</div>
<svg class="a" style="left:5px;top:258px" width="11" height="10" viewBox="0 0 11 10"><path d="M10 0 L10 10 L0 10 Z" fill="#e8e8e8"/></svg>
<div class="a" style="left:0px;top:970px;width:1871px;height:31px;background:linear-gradient(90deg,#4b4c50 0%,#4c4e57 40%,#4d4f5a 50%,#4c4e56 70%,#4b4c50 100%);"></div>
<div class="a" style="left:0px;top:970px;width:1871px;height:1px;background:#3a3a3a;"></div>
<svg class="a" style="left:21px;top:980px" width="7" height="12" viewBox="0 0 7 12"><path d="M6 0.5 L0.8 6 L6 11.5" fill="none" stroke="#9a9a9a" stroke-width="1.1"/></svg>
<svg class="a" style="left:54px;top:980px" width="7" height="12" viewBox="0 0 7 12"><path d="M0.8 0.5 L6 6 L0.8 11.5" fill="none" stroke="#9a9a9a" stroke-width="1.1"/></svg>
<div class="t" style="left:116.01px;top:979.40px;font-size:14px;line-height:14px;color:#f0f0f0;transform:scaleX(0.9844);transform-origin:0 0;">Cover</div>
<div class="t" style="left:181.12px;top:979.40px;font-size:14px;line-height:14px;color:#f0f0f0;transform:scaleX(1.0127);transform-origin:0 0;">Table of contents</div>
<div class="t" style="left:314.33px;top:979.40px;font-size:14px;line-height:14px;color:#f0f0f0;transform:scaleX(0.9589);transform-origin:0 0;">Fields</div>
<div class="a" style="left:166px;top:977px;width:1px;height:20px;background:#8a8a8a;"></div>
<div class="a" style="left:301px;top:977px;width:1px;height:20px;background:#8a8a8a;"></div>
<div class="a" style="left:362px;top:977px;width:1px;height:20px;background:#8a8a8a;"></div>
<div class="a" style="left:438px;top:977px;width:1px;height:20px;background:#8a8a8a;"></div>
<div class="a" style="left:553px;top:977px;width:1px;height:20px;background:#8a8a8a;"></div>
<div class="a" style="left:680px;top:977px;width:1px;height:20px;background:#8a8a8a;"></div>
<div class="a" style="left:795px;top:977px;width:1px;height:20px;background:#8a8a8a;"></div>
<div class="a" style="left:367px;top:968px;width:67px;height:30px;background:#fff;border-radius:0 0 6px 6px"></div>
<div class="t" style="left:375.22px;top:976.40px;font-size:14px;line-height:14px;color:#1a1a1a;">Task list</div>
<div class="a" style="left:375px;top:993px;width:51px;height:2px;background:#107c41;"></div>
<div class="t" style="left:452.38px;top:980.40px;font-size:14px;line-height:14px;color:#f0f0f0;">Kanban board</div>
<div class="t" style="left:567.29px;top:980.40px;font-size:14px;line-height:14px;color:#f0f0f0;transform:scaleX(0.9906);transform-origin:0 0;">Dashboard view</div>
<div class="t" style="left:693.32px;top:980.40px;font-size:14px;line-height:14px;color:#f0f0f0;transform:scaleX(0.9766);transform-origin:0 0;">Calendar view</div>
<svg class="a" style="left:837px;top:980px" width="11" height="11" viewBox="0 0 11 11"><path d="M5.5 0 V11 M0 5.5 H11" stroke="#e0e0e0" stroke-width="1.1"/></svg>
<svg class="a" style="left:1331px;top:980px" width="3" height="12" viewBox="0 0 3 12"><circle cx="1.5" cy="1.5" r="1.1" fill="#e0e0e0"/><circle cx="1.5" cy="6" r="1.1" fill="#e0e0e0"/><circle cx="1.5" cy="10.5" r="1.1" fill="#e0e0e0"/></svg>
<div class="a" style="left:1348px;top:978px;width:600px;height:16px;background:#393a3d;border-radius:8px"></div>
<svg class="a" style="left:1354px;top:982px" width="9" height="9" viewBox="0 0 9 9"><path d="M8.5 0 V9 L0.5 4.5 Z" fill="#d0d0d0"/></svg>
<div class="a" style="left:1365px;top:981px;width:330px;height:10px;background:#c4c4c4;border-radius:5px"></div>
<div class="a" style="left:1684px;top:981px;width:200px;height:25px;background:#2b2b2b;border-radius:4px 0 0 0"></div>
<div class="t" style="left:1691.38px;top:989.67px;font-size:12.5px;line-height:12.5px;color:#f4f4f4;">6 new notifications (Do not disturb)</div>
</body></html>
